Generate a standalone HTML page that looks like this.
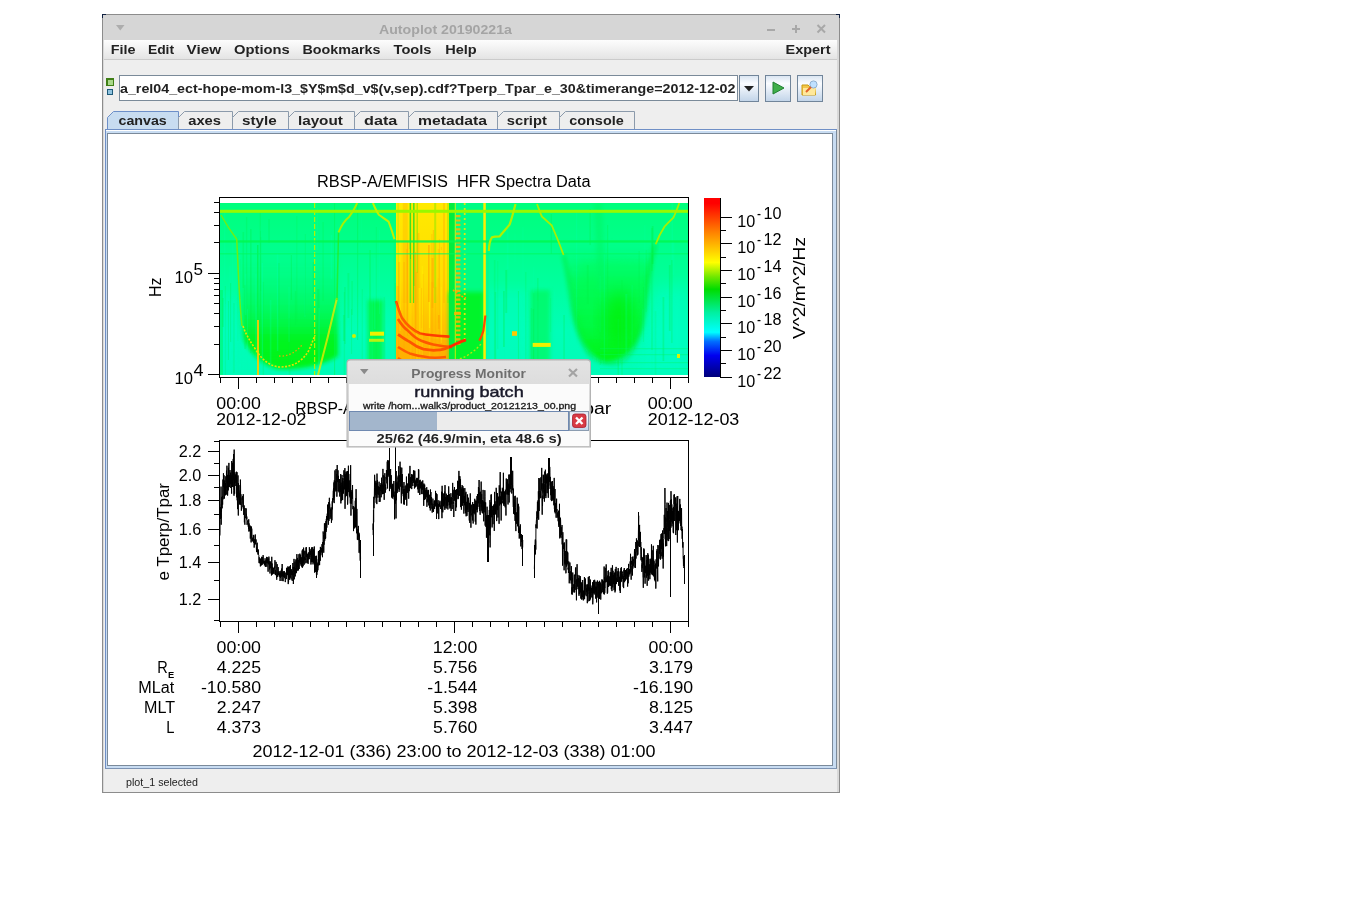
<!DOCTYPE html><html><head><meta charset="utf-8"><style>html,body{margin:0;padding:0;background:#fff;width:1345px;height:916px;overflow:hidden}svg{display:block;will-change:transform}text{font-family:"Liberation Sans",sans-serif;white-space:pre}</style></head><body>
<svg width="1345" height="916" viewBox="0 0 1345 916" shape-rendering="crispEdges">
<defs>
<linearGradient id="menuG" x1="0" y1="0" x2="0" y2="1"><stop offset="0" stop-color="#fdfdfd"/><stop offset="1" stop-color="#e4e4e4"/></linearGradient>
<linearGradient id="btnG" x1="0" y1="0" x2="0" y2="1"><stop offset="0" stop-color="#dbe6f2"/><stop offset="0.3" stop-color="#fafcff"/><stop offset="1" stop-color="#c3d5e9"/></linearGradient>
<linearGradient id="dlgT" x1="0" y1="0" x2="0" y2="1"><stop offset="0" stop-color="#e3e3e3"/><stop offset="1" stop-color="#cdcdcd"/></linearGradient>
<linearGradient id="cbar" x1="0" y1="1" x2="0" y2="0">
<stop offset="0" stop-color="#00007a"/><stop offset="0.12" stop-color="#0000f0"/><stop offset="0.2" stop-color="#0070ff"/><stop offset="0.25" stop-color="#00ffff"/><stop offset="0.36" stop-color="#00f0a0"/><stop offset="0.49" stop-color="#00dc00"/><stop offset="0.56" stop-color="#70e800"/><stop offset="0.64" stop-color="#ffff00"/><stop offset="0.80" stop-color="#ff8800"/><stop offset="0.97" stop-color="#ff0000"/><stop offset="1" stop-color="#ff0000"/></linearGradient>
</defs>
<rect x="102" y="14" width="738" height="779" fill="#8c8c8c"/>
<rect x="103" y="15" width="736" height="777" fill="#eeeeee"/>
<rect x="103" y="15" width="736" height="25" fill="#d6d6d6"/>
<path d="M102 14h4v1h-3v3h-1z" fill="#102040"/>
<path d="M836 14h4v4h-1v-3h-3z" fill="#102040"/>
<rect x="837" y="40" width="2" height="752" fill="#d9d9d9"/>
<rect x="103" y="40" width="1" height="752" fill="#d9d9d9"/>
<text x="379.0" y="33.7" font-size="13" font-weight="bold" fill="#a4a4a4" textLength="133.0" lengthAdjust="spacingAndGlyphs">Autoplot 20190221a</text>
<path d="M116 25h8.5l-4.25 5.5z" fill="#adadad" shape-rendering="geometricPrecision"/>
<rect x="767" y="29" width="8" height="2" fill="#a8a8a8"/>
<rect x="792" y="28" width="8" height="2" fill="#a8a8a8"/><rect x="795" y="25" width="2" height="8" fill="#a8a8a8"/>
<path d="M817.5 25L825 32.5M825 25L817.5 32.5" stroke="#a8a8a8" stroke-width="2" shape-rendering="geometricPrecision"/>
<rect x="104" y="40" width="733" height="19" fill="url(#menuG)"/>
<rect x="104" y="59" width="733" height="1" fill="#cbcbcb"/>
<text x="110.7" y="53.8" font-size="13" font-weight="bold" fill="#222" textLength="24.8" lengthAdjust="spacingAndGlyphs">File</text>
<text x="147.9" y="53.8" font-size="13" font-weight="bold" fill="#222" textLength="26.2" lengthAdjust="spacingAndGlyphs">Edit</text>
<text x="186.5" y="53.8" font-size="13" font-weight="bold" fill="#222" textLength="34.5" lengthAdjust="spacingAndGlyphs">View</text>
<text x="234.0" y="53.8" font-size="13" font-weight="bold" fill="#222" textLength="55.7" lengthAdjust="spacingAndGlyphs">Options</text>
<text x="302.5" y="53.8" font-size="13" font-weight="bold" fill="#222" textLength="78.0" lengthAdjust="spacingAndGlyphs">Bookmarks</text>
<text x="393.6" y="53.8" font-size="13" font-weight="bold" fill="#222" textLength="37.9" lengthAdjust="spacingAndGlyphs">Tools</text>
<text x="445.2" y="53.8" font-size="13" font-weight="bold" fill="#222" textLength="31.5" lengthAdjust="spacingAndGlyphs">Help</text>
<text x="785.5" y="53.8" font-size="13" font-weight="bold" fill="#222" textLength="45.0" lengthAdjust="spacingAndGlyphs">Expert</text>
<rect x="106" y="78" width="8" height="8" rx="1" fill="#3f7f16"/><rect x="107.5" y="79.5" width="5" height="5" fill="#a9d88a"/>
<rect x="107" y="89" width="6" height="6" fill="#1d5a7a"/><rect x="108" y="90" width="4" height="4" fill="#8fc3df"/>
<rect x="119" y="75" width="619" height="26" fill="#7a8a99"/><rect x="120" y="76" width="617" height="24" fill="#fff"/>
<text x="120.0" y="93.1" font-size="13" font-weight="bold" fill="#222" textLength="615.5" lengthAdjust="spacingAndGlyphs">a_rel04_ect-hope-mom-l3_$Y$m$d_v$(v,sep).cdf?Tperp_Tpar_e_30&amp;timerange=2012-12-02</text>
<rect x="739" y="75" width="20" height="27" fill="#71859a"/><rect x="740" y="76" width="18" height="25" fill="url(#btnG)"/>
<rect x="765" y="75" width="26" height="27" fill="#71859a"/><rect x="766" y="76" width="24" height="25" fill="url(#btnG)"/>
<rect x="797" y="75" width="26" height="27" fill="#71859a"/><rect x="798" y="76" width="24" height="25" fill="url(#btnG)"/>
<path d="M744 86h10l-5 5.5z" fill="#222" shape-rendering="geometricPrecision"/>
<path d="M773 82v12l11-6z" fill="#3fae4a" stroke="#1f8030" stroke-width="1" shape-rendering="geometricPrecision"/>
<g shape-rendering="geometricPrecision"><path d="M802 85h6l1.5 1.5h6v8.5h-13.5z" fill="#f2c64a" stroke="#c99a10" stroke-width="1"/><path d="M803 88h13l-1 7h-12z" fill="#ffe89a"/><circle cx="813.5" cy="84.5" r="3.6" fill="#bfe0ff" stroke="#8fb0d0" stroke-width="1"/><path d="M811 87l-5 5" stroke="#e0602a" stroke-width="2"/></g>
<path d="M107 129V117l6-6H178V129z" fill="#c8dcf0" stroke="#6d8fc8" stroke-width="1" shape-rendering="geometricPrecision" transform="translate(0.5,0.5)"/>
<text x="118.5" y="124.7" font-size="13" font-weight="bold" fill="#222" textLength="48.2" lengthAdjust="spacingAndGlyphs">canvas</text>
<path d="M178 129V117l6-6H232V129" fill="#eeeeee" stroke="#8b9aab" stroke-width="1" shape-rendering="geometricPrecision" transform="translate(0.5,0.5)"/>
<text x="188.2" y="124.7" font-size="13" font-weight="bold" fill="#222" textLength="32.8" lengthAdjust="spacingAndGlyphs">axes</text>
<path d="M232 129V117l6-6H288V129" fill="#eeeeee" stroke="#8b9aab" stroke-width="1" shape-rendering="geometricPrecision" transform="translate(0.5,0.5)"/>
<text x="242.1" y="124.7" font-size="13" font-weight="bold" fill="#222" textLength="34.7" lengthAdjust="spacingAndGlyphs">style</text>
<path d="M288 129V117l6-6H354V129" fill="#eeeeee" stroke="#8b9aab" stroke-width="1" shape-rendering="geometricPrecision" transform="translate(0.5,0.5)"/>
<text x="297.9" y="124.7" font-size="13" font-weight="bold" fill="#222" textLength="45.0" lengthAdjust="spacingAndGlyphs">layout</text>
<path d="M354 129V117l6-6H408V129" fill="#eeeeee" stroke="#8b9aab" stroke-width="1" shape-rendering="geometricPrecision" transform="translate(0.5,0.5)"/>
<text x="364.0" y="124.7" font-size="13" font-weight="bold" fill="#222" textLength="33.3" lengthAdjust="spacingAndGlyphs">data</text>
<path d="M408 129V117l6-6H497V129" fill="#eeeeee" stroke="#8b9aab" stroke-width="1" shape-rendering="geometricPrecision" transform="translate(0.5,0.5)"/>
<text x="418.0" y="124.7" font-size="13" font-weight="bold" fill="#222" textLength="69.0" lengthAdjust="spacingAndGlyphs">metadata</text>
<path d="M497 129V117l6-6H559V129" fill="#eeeeee" stroke="#8b9aab" stroke-width="1" shape-rendering="geometricPrecision" transform="translate(0.5,0.5)"/>
<text x="506.8" y="124.7" font-size="13" font-weight="bold" fill="#222" textLength="40.0" lengthAdjust="spacingAndGlyphs">script</text>
<path d="M559 129V117l6-6H634V129" fill="#eeeeee" stroke="#8b9aab" stroke-width="1" shape-rendering="geometricPrecision" transform="translate(0.5,0.5)"/>
<text x="569.2" y="124.7" font-size="13" font-weight="bold" fill="#222" textLength="54.6" lengthAdjust="spacingAndGlyphs">console</text>
<rect x="105" y="129" width="732" height="640" fill="#6f8fc6"/>
<rect x="106" y="130" width="730" height="638" fill="#c8dcf2"/>
<rect x="106" y="130" width="730" height="1" fill="#ffffff"/>
<rect x="836" y="130" width="1" height="639" fill="#7b8a9a"/>
<rect x="105" y="768" width="732" height="1" fill="#7d93b3"/>
<rect x="107" y="133" width="726" height="633" fill="#7b8a9a"/>
<rect x="108" y="134" width="724" height="631" fill="#ffffff"/>
<text x="126.0" y="786.0" font-size="11" font-weight="normal" fill="#222" textLength="72.0" lengthAdjust="spacingAndGlyphs">plot_1 selected</text>
<defs><clipPath id="spc"><rect x="220" y="203" width="468" height="172"/></clipPath>
<linearGradient id="bgG" x1="0" y1="0" x2="0" y2="1">
<stop offset="0" stop-color="#00ff7c"/><stop offset="0.22" stop-color="#00ff8a"/><stop offset="0.5" stop-color="#00ffa0"/><stop offset="0.75" stop-color="#00feb8"/><stop offset="1" stop-color="#00fcb8"/></linearGradient>
<linearGradient id="yelG" x1="0" y1="0" x2="0" y2="1">
<stop offset="0" stop-color="#ffea00"/><stop offset="0.45" stop-color="#ffdc00"/><stop offset="0.7" stop-color="#ffc400"/><stop offset="1" stop-color="#ffb000"/></linearGradient>
<linearGradient id="grnU" x1="0" y1="0" x2="0" y2="1">
<stop offset="0" stop-color="#00fc70" stop-opacity="0"/><stop offset="0.35" stop-color="#00f840" stop-opacity="0.7"/><stop offset="1" stop-color="#00f614" stop-opacity="1"/></linearGradient>
<filter id="bl2" x="-20%" y="-20%" width="140%" height="140%"><feGaussianBlur stdDeviation="2"/></filter>
<filter id="bl4" x="-20%" y="-20%" width="140%" height="140%"><feGaussianBlur stdDeviation="4"/></filter>
<filter id="bl8" x="-30%" y="-30%" width="160%" height="160%"><feGaussianBlur stdDeviation="8"/></filter>
</defs>
<g clip-path="url(#spc)" shape-rendering="geometricPrecision">
<rect x="220" y="203" width="468" height="172" fill="url(#bgG)"/>
<path d="M652 290 L688 285 L688 375 L640 375 Z" fill="#00fec8" opacity="0.6" filter="url(#bl8)"/>
<path d="M220 300 L238 300 L240 375 L220 375Z" fill="#00fcc0" opacity="0.5" filter="url(#bl4)"/>
<path d="M486 290 L530 290 L528 375 L486 375Z" fill="#00fec0" opacity="0.5" filter="url(#bl4)"/>
<linearGradient id="grnL" x1="0" y1="250" x2="0" y2="372" gradientUnits="userSpaceOnUse"><stop offset="0" stop-color="#00fc60" stop-opacity="0"/><stop offset="0.4" stop-color="#00f840" stop-opacity="0.55"/><stop offset="0.75" stop-color="#00f414" stop-opacity="0.95"/><stop offset="1" stop-color="#00f414" stop-opacity="1"/></linearGradient>
<path d="M240 250 C240.5 300 241 330 244 340 C252 356 264 366 278 369 C300 370 322 366 338 356 L338 250 Z" fill="url(#grnL)" filter="url(#bl2)"/>
<rect x="220" y="290" width="3" height="85" fill="#00f660" opacity="0.5"/>
<rect x="368" y="300" width="15" height="75" fill="#00f630" opacity="0.75" filter="url(#bl2)"/>
<rect x="530" y="290" width="20" height="85" fill="#00f850" opacity="0.6" filter="url(#bl2)"/>
<path d="M560 240 C566 260 571 290 574 315 C580 345 592 358 606 362 C622 362 636 350 641 326 C645 300 649 270 656 244 Z" fill="url(#grnU)" filter="url(#bl2)"/>
<path d="M578 262 C590 258 640 258 652 262 L644 330 C630 345 600 345 582 330Z" fill="#00ff50" opacity="0.35" filter="url(#bl4)"/>
<ellipse cx="619" cy="320" rx="16" ry="28" fill="#00f000" opacity="0.7" filter="url(#bl8)"/>
<path d="M594 203 L602 203 L606 290 L598 290Z" fill="#00f660" opacity="0.5" filter="url(#bl2)"/>
<rect x="396" y="203" width="53" height="172" fill="url(#yelG)"/>
<rect x="397.4" y="203" width="1.4" height="100" fill="#c8f000" opacity="0.8"/>
<rect x="402.8" y="203" width="4.9" height="100" fill="#ffc000" opacity="0.5"/>
<rect x="409.6" y="203" width="1.5" height="100" fill="#20e020" opacity="0.85"/>
<rect x="413" y="203" width="1.6" height="100" fill="#30e020" opacity="0.85"/>
<rect x="416.5" y="203" width="1.5" height="100" fill="#a0e800" opacity="0.8"/>
<rect x="434.2" y="203" width="2" height="100" fill="#a8e800" opacity="0.7"/>
<rect x="443" y="203" width="2" height="100" fill="#ffb800" opacity="0.5"/>
<rect x="447" y="203" width="2" height="100" fill="#b0e800" opacity="0.6"/>
<rect x="437.9" y="278" width="1.2" height="45" fill="#ffa800" opacity="0.43"/>
<rect x="417.2" y="233" width="2.2" height="99" fill="#ffa800" opacity="0.38"/>
<rect x="418.6" y="288" width="2.0" height="75" fill="#fff000" opacity="0.47"/>
<rect x="431.2" y="234" width="1.2" height="119" fill="#ffa800" opacity="0.32"/>
<rect x="431.3" y="282" width="2.1" height="118" fill="#ffa800" opacity="0.31"/>
<rect x="432.8" y="230" width="1.4" height="58" fill="#ffa800" opacity="0.41"/>
<rect x="437.9" y="249" width="1.8" height="80" fill="#ffa800" opacity="0.58"/>
<rect x="408.2" y="249" width="1.5" height="86" fill="#fff000" opacity="0.38"/>
<rect x="396.8" y="286" width="2.0" height="73" fill="#ffa800" opacity="0.63"/>
<rect x="416.8" y="286" width="1.1" height="107" fill="#ffa800" opacity="0.54"/>
<rect x="431.6" y="258" width="1.7" height="50" fill="#ffa800" opacity="0.54"/>
<rect x="429.0" y="253" width="1.1" height="75" fill="#fff000" opacity="0.58"/>
<rect x="415.8" y="273" width="2.1" height="129" fill="#fff000" opacity="0.55"/>
<rect x="438.1" y="239" width="2.0" height="76" fill="#fff000" opacity="0.49"/>
<rect x="420.9" y="288" width="1.4" height="40" fill="#ffa800" opacity="0.45"/>
<rect x="428.8" y="286" width="1.3" height="129" fill="#fff000" opacity="0.37"/>
<rect x="438.8" y="239" width="0.9" height="117" fill="#ffa800" opacity="0.59"/>
<rect x="403.3" y="262" width="1.5" height="90" fill="#ffa800" opacity="0.34"/>
<rect x="440.9" y="247" width="0.9" height="40" fill="#ffa800" opacity="0.37"/>
<rect x="413.8" y="286" width="1.5" height="81" fill="#fff000" opacity="0.53"/>
<rect x="440.7" y="250" width="1.4" height="93" fill="#fff000" opacity="0.56"/>
<rect x="422.1" y="271" width="0.8" height="44" fill="#fff000" opacity="0.35"/>
<rect x="407.1" y="242" width="1.1" height="94" fill="#ffa800" opacity="0.61"/>
<rect x="414.2" y="252" width="1.8" height="111" fill="#ffa800" opacity="0.63"/>
<rect x="415.5" y="272" width="2.0" height="61" fill="#ffa800" opacity="0.60"/>
<rect x="422.3" y="274" width="1.2" height="84" fill="#ffa800" opacity="0.32"/>
<rect x="398.2" y="262" width="2.0" height="42" fill="#ffa800" opacity="0.49"/>
<rect x="421.5" y="266" width="1.5" height="91" fill="#fff000" opacity="0.47"/>
<rect x="428.0" y="245" width="1.7" height="57" fill="#ffa800" opacity="0.65"/>
<rect x="434.8" y="287" width="1.4" height="64" fill="#ffa800" opacity="0.32"/>
<rect x="396.9" y="245" width="1.0" height="102" fill="#fff000" opacity="0.39"/>
<rect x="399.4" y="242" width="1.5" height="89" fill="#fff000" opacity="0.46"/>
<rect x="410.3" y="259" width="1.1" height="106" fill="#fff000" opacity="0.39"/>
<rect x="406.1" y="249" width="2.1" height="73" fill="#ffa800" opacity="0.36"/>
<rect x="449" y="203" width="35" height="172" fill="#00fc84"/>
<path d="M449 292 L484 292 L484 375 L449 375Z" fill="#00f428" opacity="0.95" filter="url(#bl2)"/>
<rect x="449" y="203" width="5.8" height="172" fill="#00ee40"/>
<rect x="454.8" y="203" width="1" height="172" fill="#f0f000" opacity="0.8"/>
<line x1="458.2" y1="215" x2="458.2" y2="345" stroke="#ffb000" stroke-width="4.5" stroke-dasharray="2.2 2.2" opacity="0.9"/>
<line x1="464.7" y1="203" x2="464.7" y2="340" stroke="#ffe000" stroke-width="1.8" stroke-dasharray="2 3" opacity="0.9"/>
<rect x="483.3" y="203" width="2.5" height="172" fill="#ffee00"/>
<path d="M396 301 C398 308 400 314 402 318 C406 324 412 330 420 333.5 C428 335 440 336 449.6 336.6" fill="none" stroke="#ff3c00" stroke-width="2.6"/>
<path d="M398 319 C401 324 404 328 407.6 330.3 C413 336 417 339 421.3 340.8 C427 343 431 344.5 436 345 C441 346 445 346.5 452 347" fill="none" stroke="#ff3000" stroke-width="2.6"/>
<path d="M398 334.5 C402 337 406 340 409.7 341.8 C414 345 418 347.5 423.4 349.2 C428 350 432 350.5 436 350.2 C442 350 448 348 453.7 345 C458 343 462 341 466 339.8" fill="none" stroke="#ff2c00" stroke-width="2.8"/>
<path d="M398 347 C402 349.5 406 352 409.7 353.4 C415 355 419 356 423.4 356.5 C430 358 438 358 446 357" fill="none" stroke="#ff3800" stroke-width="2.6"/>
<path d="M398 358 C404 362 412 366 420 368" fill="none" stroke="#ff4000" stroke-width="2.2"/>
<path d="M485.4 315.5 C485 320 484 325 483.4 330.7 C482 335 481 338 479.3 340.8" fill="none" stroke="#ff4800" stroke-width="2.2"/>
<path d="M396 300 C405 330 425 340 449 340 L449 375 L396 375Z" fill="#ffa000" opacity="0.35"/>
<path d="M453 290 C456 292 460 296 466 298" fill="none" stroke="#ffa000" stroke-width="1.6" stroke-dasharray="2 1.5"/>
<rect x="454" y="312" width="7" height="3" fill="#ffb000" opacity="0.8"/>
<path d="M456 360 C465 358 474 352 481 344" fill="none" stroke="#e8e000" stroke-width="1.4" stroke-dasharray="2 2" opacity="0.8"/>
<rect x="260.1" y="231" width="0.9" height="116" fill="#00ee40" opacity="0.21"/>
<rect x="294.8" y="291" width="1.4" height="34" fill="#00ee40" opacity="0.21"/>
<rect x="494.6" y="292" width="1.6" height="135" fill="#00ee40" opacity="0.26"/>
<rect x="357.0" y="203" width="1.2" height="137" fill="#00ee40" opacity="0.30"/>
<rect x="493.9" y="260" width="1.6" height="113" fill="#00ee40" opacity="0.19"/>
<rect x="262.5" y="282" width="1.6" height="132" fill="#00ee40" opacity="0.18"/>
<rect x="567.1" y="290" width="1.6" height="46" fill="#00ffb0" opacity="0.26"/>
<rect x="603.8" y="254" width="0.9" height="111" fill="#00ffb0" opacity="0.29"/>
<rect x="288.5" y="287" width="1.1" height="55" fill="#00ffb0" opacity="0.23"/>
<rect x="506.8" y="227" width="1.7" height="42" fill="#00ffb0" opacity="0.23"/>
<rect x="651.1" y="228" width="2.0" height="122" fill="#00ee40" opacity="0.24"/>
<rect x="504.0" y="319" width="0.9" height="114" fill="#00ffb0" opacity="0.19"/>
<rect x="259.7" y="226" width="1.0" height="46" fill="#00ffb0" opacity="0.18"/>
<rect x="617.5" y="319" width="1.5" height="105" fill="#00ee40" opacity="0.26"/>
<rect x="244.3" y="285" width="1.6" height="64" fill="#00ee40" opacity="0.25"/>
<rect x="312.7" y="262" width="1.4" height="35" fill="#00ee40" opacity="0.27"/>
<rect x="229.2" y="266" width="1.3" height="45" fill="#00ffb0" opacity="0.20"/>
<rect x="645.6" y="250" width="1.4" height="62" fill="#00ee40" opacity="0.14"/>
<rect x="651.2" y="271" width="1.8" height="109" fill="#00ffb0" opacity="0.27"/>
<rect x="600.6" y="301" width="1.2" height="50" fill="#00ee40" opacity="0.17"/>
<rect x="487.5" y="241" width="0.9" height="94" fill="#00ee40" opacity="0.21"/>
<rect x="550.7" y="214" width="1.3" height="40" fill="#00ee40" opacity="0.25"/>
<rect x="375.8" y="227" width="1.0" height="132" fill="#00ee40" opacity="0.18"/>
<rect x="379.0" y="230" width="1.0" height="84" fill="#00ffb0" opacity="0.20"/>
<rect x="532.7" y="309" width="1.4" height="140" fill="#00ee40" opacity="0.30"/>
<rect x="244.8" y="274" width="1.9" height="41" fill="#00ffb0" opacity="0.23"/>
<rect x="224.2" y="211" width="1.1" height="70" fill="#00ffb0" opacity="0.25"/>
<rect x="344.1" y="287" width="1.7" height="57" fill="#00ee40" opacity="0.22"/>
<rect x="586.9" y="265" width="1.8" height="39" fill="#00ee40" opacity="0.23"/>
<rect x="671.5" y="203" width="1.6" height="61" fill="#00ffb0" opacity="0.23"/>
<rect x="530.6" y="308" width="1.5" height="102" fill="#00ee40" opacity="0.25"/>
<rect x="371.6" y="283" width="1.4" height="94" fill="#00ffb0" opacity="0.13"/>
<rect x="621.4" y="280" width="1.2" height="97" fill="#00ee40" opacity="0.26"/>
<rect x="256.4" y="307" width="1.0" height="125" fill="#00ffb0" opacity="0.14"/>
<rect x="638.4" y="251" width="1.6" height="52" fill="#00ee40" opacity="0.15"/>
<rect x="528.9" y="289" width="1.3" height="21" fill="#00ffb0" opacity="0.21"/>
<rect x="351.1" y="309" width="1.0" height="45" fill="#00ee40" opacity="0.24"/>
<rect x="642.1" y="309" width="1.9" height="36" fill="#00ffb0" opacity="0.16"/>
<rect x="553.8" y="292" width="1.6" height="74" fill="#00ffb0" opacity="0.19"/>
<rect x="525.2" y="272" width="1.2" height="104" fill="#00ee40" opacity="0.21"/>
<rect x="651.7" y="226" width="1.8" height="38" fill="#00ee40" opacity="0.32"/>
<rect x="330.7" y="235" width="1.4" height="44" fill="#00ffb0" opacity="0.28"/>
<rect x="318.1" y="308" width="1.8" height="76" fill="#00ffb0" opacity="0.30"/>
<rect x="505.3" y="270" width="1.9" height="43" fill="#00ee40" opacity="0.30"/>
<rect x="230.1" y="283" width="1.0" height="59" fill="#00ee40" opacity="0.28"/>
<rect x="668.9" y="265" width="1.8" height="66" fill="#00ee40" opacity="0.27"/>
<rect x="250.0" y="229" width="1.6" height="124" fill="#00ee40" opacity="0.28"/>
<rect x="517.9" y="291" width="1.0" height="85" fill="#00ee40" opacity="0.32"/>
<rect x="224.9" y="286" width="0.9" height="126" fill="#00ee40" opacity="0.20"/>
<rect x="374.4" y="258" width="0.9" height="71" fill="#00ffb0" opacity="0.31"/>
<rect x="241.4" y="316" width="0.8" height="60" fill="#00ffb0" opacity="0.21"/>
<rect x="537.2" y="278" width="1.3" height="117" fill="#00ee40" opacity="0.24"/>
<rect x="233.4" y="303" width="1.1" height="70" fill="#00ee40" opacity="0.25"/>
<rect x="242.4" y="232" width="1.7" height="56" fill="#00ee40" opacity="0.24"/>
<rect x="643.1" y="287" width="0.9" height="55" fill="#00ee40" opacity="0.17"/>
<rect x="503.0" y="291" width="1.8" height="56" fill="#00ee40" opacity="0.31"/>
<rect x="259.6" y="212" width="1.3" height="111" fill="#00ee40" opacity="0.25"/>
<rect x="575.9" y="211" width="1.3" height="135" fill="#00ffb0" opacity="0.21"/>
<rect x="347.4" y="273" width="1.9" height="45" fill="#00ee40" opacity="0.22"/>
<rect x="607.1" y="225" width="1.1" height="126" fill="#00ee40" opacity="0.26"/>
<rect x="361.3" y="217" width="0.8" height="30" fill="#00ffb0" opacity="0.13"/>
<rect x="662.5" y="297" width="1.8" height="64" fill="#00ee40" opacity="0.28"/>
<rect x="532.9" y="267" width="1.4" height="83" fill="#00ffb0" opacity="0.14"/>
<rect x="255.0" y="274" width="1.7" height="108" fill="#00ffb0" opacity="0.18"/>
<rect x="393.7" y="235" width="1.8" height="65" fill="#00ee40" opacity="0.15"/>
<rect x="317.3" y="289" width="2.0" height="68" fill="#00ee40" opacity="0.30"/>
<rect x="322.5" y="222" width="1.2" height="79" fill="#00ee40" opacity="0.24"/>
<rect x="537.4" y="301" width="0.9" height="49" fill="#00ffb0" opacity="0.13"/>
<rect x="245.9" y="217" width="1.4" height="114" fill="#00ee40" opacity="0.21"/>
<rect x="316.9" y="208" width="1.2" height="42" fill="#00ffb0" opacity="0.20"/>
<rect x="343.7" y="292" width="1.4" height="104" fill="#00ee40" opacity="0.20"/>
<rect x="488.3" y="274" width="1.9" height="89" fill="#00ffb0" opacity="0.13"/>
<rect x="238.9" y="248" width="1.5" height="116" fill="#00ffb0" opacity="0.14"/>
<rect x="599.7" y="276" width="0.8" height="56" fill="#00ffb0" opacity="0.16"/>
<rect x="589.3" y="209" width="1.7" height="36" fill="#00ee40" opacity="0.24"/>
<rect x="237.3" y="236" width="1.0" height="105" fill="#00ee40" opacity="0.12"/>
<rect x="342.9" y="315" width="1.9" height="26" fill="#00ee40" opacity="0.26"/>
<rect x="351.5" y="281" width="1.1" height="34" fill="#00ee40" opacity="0.30"/>
<rect x="625.3" y="294" width="2.0" height="65" fill="#00ffb0" opacity="0.19"/>
<rect x="296.0" y="216" width="1.5" height="106" fill="#00ee40" opacity="0.14"/>
<rect x="533.1" y="293" width="1.3" height="133" fill="#00ee40" opacity="0.20"/>
<rect x="550.3" y="298" width="0.9" height="34" fill="#00ee40" opacity="0.17"/>
<rect x="563.4" y="315" width="1.3" height="138" fill="#00ee40" opacity="0.29"/>
<rect x="383.6" y="297" width="1.4" height="124" fill="#00ee40" opacity="0.15"/>
<rect x="304.3" y="267" width="1.2" height="50" fill="#00ffb0" opacity="0.16"/>
<rect x="514.5" y="234" width="1.0" height="28" fill="#00ffb0" opacity="0.15"/>
<rect x="221.9" y="298" width="2.0" height="29" fill="#00ee40" opacity="0.22"/>
<rect x="654.7" y="311" width="1.6" height="108" fill="#00ee40" opacity="0.13"/>
<rect x="225.0" y="304" width="1.4" height="57" fill="#00ffb0" opacity="0.28"/>
<rect x="519.4" y="320" width="1.8" height="77" fill="#00ffb0" opacity="0.24"/>
<rect x="522.3" y="227" width="1.2" height="73" fill="#00ffb0" opacity="0.16"/>
<rect x="269.8" y="300" width="1.6" height="125" fill="#00ffb0" opacity="0.24"/>
<rect x="247.1" y="309" width="0.9" height="77" fill="#00ffb0" opacity="0.27"/>
<rect x="288.7" y="318" width="1.6" height="105" fill="#00ee40" opacity="0.17"/>
<rect x="260.3" y="237" width="1.3" height="54" fill="#00ee40" opacity="0.13"/>
<rect x="232.1" y="243" width="1.3" height="139" fill="#00ffb0" opacity="0.16"/>
<rect x="276.9" y="253" width="1.4" height="98" fill="#00ffb0" opacity="0.29"/>
<rect x="599.7" y="305" width="1.0" height="60" fill="#00ee40" opacity="0.24"/>
<rect x="239.8" y="259" width="1.0" height="40" fill="#00ee40" opacity="0.12"/>
<rect x="278.3" y="263" width="1.3" height="56" fill="#00ee40" opacity="0.25"/>
<rect x="361.7" y="289" width="1.1" height="115" fill="#00ee40" opacity="0.18"/>
<rect x="497.2" y="261" width="1.1" height="88" fill="#00ee40" opacity="0.15"/>
<rect x="569.1" y="285" width="1.0" height="57" fill="#00ffb0" opacity="0.12"/>
<rect x="394.7" y="283" width="1.0" height="134" fill="#00ee40" opacity="0.24"/>
<rect x="227.9" y="301" width="1.0" height="59" fill="#00ee40" opacity="0.29"/>
<rect x="644.2" y="225" width="1.2" height="140" fill="#00ffb0" opacity="0.13"/>
<rect x="290.8" y="255" width="1.1" height="45" fill="#00ee40" opacity="0.30"/>
<rect x="237.1" y="314" width="1.4" height="74" fill="#00ffb0" opacity="0.31"/>
<rect x="304.8" y="234" width="1.2" height="81" fill="#00ee40" opacity="0.18"/>
<rect x="261.7" y="263" width="1.3" height="120" fill="#00ffb0" opacity="0.32"/>
<rect x="672.5" y="241" width="1.9" height="34" fill="#00ffb0" opacity="0.25"/>
<rect x="671.3" y="260" width="1.2" height="83" fill="#00ee40" opacity="0.30"/>
<rect x="268.3" y="219" width="1.5" height="24" fill="#00ee40" opacity="0.23"/>
<rect x="631.4" y="285" width="1.4" height="96" fill="#00ffb0" opacity="0.13"/>
<line x1="314.6" y1="203" x2="314.6" y2="375" stroke="#b8f000" stroke-width="1.2" stroke-dasharray="5 2"/>
<line x1="258" y1="320" x2="258" y2="375" stroke="#ffc800" stroke-width="2" opacity="0.9"/>
<line x1="257.8" y1="245" x2="257.8" y2="320" stroke="#00f440" stroke-width="1.2" opacity="0.7"/>
<line x1="334.6" y1="203" x2="334.6" y2="375" stroke="#00f650" stroke-width="1" opacity="0.5"/>
<line x1="370" y1="250" x2="370" y2="375" stroke="#00f650" stroke-width="1" opacity="0.6"/>
<rect x="220" y="209.8" width="468" height="3" fill="#98f800"/>
<rect x="220" y="240.3" width="468" height="2.3" fill="#00f850" opacity="0.85"/>
<rect x="220" y="253" width="468" height="1.5" fill="#00fa60" opacity="0.6"/>
<rect x="600" y="348" width="88" height="1.2" fill="#00f660" opacity="0.35"/>
<rect x="600" y="354" width="88" height="1.2" fill="#00f660" opacity="0.35"/>
<rect x="600" y="362" width="88" height="1.2" fill="#00f660" opacity="0.35"/>
<rect x="600" y="368" width="88" height="1.2" fill="#00f660" opacity="0.35"/>
<path d="M221 215 C226 224 232 233 236.7 239.3 C238 260 239 300 242 326" fill="none" stroke="#80ec00" stroke-width="1.5" opacity="0.85"/>
<path d="M243 326 C246 335 250 341 256 350 C262 360 270 366 279 367 C290 367 300 364 308 352 C311 346 313 340 315 335" fill="none" stroke="#e8e000" stroke-width="1.6" stroke-dasharray="2 1.5"/>
<path d="M279 356 C288 357 296 352 302 345" fill="none" stroke="#ffa000" stroke-width="1.3" stroke-dasharray="1.5 2" opacity="0.9"/>
<path d="M337 298 C332 320 326 345 318 375" fill="none" stroke="#e8e800" stroke-width="2" opacity="0.8"/>
<path d="M337 300 C337.5 280 338 255 338.5 232.4" fill="none" stroke="#30e800" stroke-width="1.5" opacity="0.6"/>
<path d="M338.5 232.4 C342 224 345 220 349.3 216.7 C353 212 355 208 357.2 203" fill="none" stroke="#a8f000" stroke-width="2"/>
<path d="M372.9 203 C375 208 377 212 378.8 214.7 C382 217 385 219 388.6 221.6 C391 228 393 234 394.5 239.3" fill="none" stroke="#c0f000" stroke-width="2"/>
<path d="M488.9 251 C489 245 490 240 491.9 237.3 C494 236.5 497 236.3 499.7 236.3 C503 232 506 229 509.6 224.6 C512 218 514 210 515.5 204" fill="none" stroke="#b0f000" stroke-width="2.2"/>
<path d="M537 204 C539 209 540 213 542 216.7 C546 220 549 223 551.8 225.5 C556 235 560 245 563.6 255" fill="none" stroke="#a8f000" stroke-width="1.8"/>
<path d="M563.6 255 C566 266 568 277 569.5 288.4 C572 310 578 340 590 355" fill="none" stroke="#10e010" stroke-width="3" opacity="0.45" filter="url(#bl2)"/>
<path d="M679.3 203 C677 210 675 214 673.4 217.7 C670 221 667 224 664.6 226.5 C661 232 658 238 655.7 244.2" fill="none" stroke="#a8f000" stroke-width="1.8"/>
<path d="M655.7 244.2 C652 255 650 266 647.9 278.6 C646 300 643 320 640 330" fill="none" stroke="#10e010" stroke-width="3" opacity="0.45" filter="url(#bl2)"/>
<path d="M590 355 C598 362 610 366 620 362 C630 357 636 345 640 330" fill="none" stroke="#10e010" stroke-width="3" opacity="0.4" filter="url(#bl2)"/>
<rect x="512" y="331.2" width="5" height="4.6" fill="#ffc800"/>
<rect x="532.7" y="342.9" width="18" height="4" fill="#f0f000"/>
<rect x="370" y="331.7" width="14" height="4" fill="#f0f000"/><rect x="369" y="338.8" width="15" height="3" fill="#e8f000" opacity="0.8"/>
<circle cx="354" cy="336" r="2" fill="#d0f000"/>
<rect x="677" y="354" width="3" height="4" fill="#e0f000"/>
</g>
<g shape-rendering="crispEdges">
<path d="M219.5 197.5H688.5V377.5H219.5Z" fill="none" stroke="#000" stroke-width="1"/>
<path d="M220.5 378v5 M238.5 378v11 M256.5 378v5 M274.5 378v5 M292.5 378v5 M310.5 378v5 M328.5 378v5 M346.5 378v5 M364.5 378v5 M382.5 378v5 M400.5 378v5 M418.5 378v5 M436.5 378v5 M454.5 378v11 M472.5 378v5 M490.5 378v5 M508.5 378v5 M526.5 378v5 M544.5 378v5 M562.5 378v5 M580.5 378v5 M598.5 378v5 M616.5 378v5 M634.5 378v5 M652.5 378v5 M670.5 378v11 M688.5 378v5" stroke="#000" stroke-width="1" fill="none"/>
<path d="M208 374.5h11 M214 344.5h5 M214 326.5h5 M214 313.5h5 M214 303.5h5 M214 295.5h5 M214 289.5h5 M214 283.5h5 M214 278.5h5 M208 273.5h11 M214 242.5h5 M214 225.5h5 M214 212.5h5 M214 202.5h5" stroke="#000" stroke-width="1" fill="none"/>
</g>
<text x="317.0" y="186.6" font-size="16" font-weight="normal" fill="#000" textLength="273.5" lengthAdjust="spacingAndGlyphs">RBSP-A/EMFISIS  HFR Spectra Data</text>
<text x="174.5" y="283.1" font-size="16" font-weight="normal" fill="#000" textLength="18.5" lengthAdjust="spacingAndGlyphs">10</text>
<text x="193.5" y="275.1" font-size="16" font-weight="normal" fill="#000" textLength="9.5" lengthAdjust="spacingAndGlyphs">5</text>
<text x="174.5" y="383.9" font-size="16" font-weight="normal" fill="#000" textLength="18.5" lengthAdjust="spacingAndGlyphs">10</text>
<text x="193.5" y="376.0" font-size="16" font-weight="normal" fill="#000" textLength="10.0" lengthAdjust="spacingAndGlyphs">4</text>
<text transform="translate(161.1,297) rotate(-90)" font-size="16" textLength="19.5" lengthAdjust="spacingAndGlyphs">Hz</text>
<text x="216.3" y="409.0" font-size="16" font-weight="normal" fill="#000" textLength="44.5" lengthAdjust="spacingAndGlyphs">00:00</text>
<text x="216.3" y="424.8" font-size="16" font-weight="normal" fill="#000" textLength="90.0" lengthAdjust="spacingAndGlyphs">2012-12-02</text>
<text x="647.8" y="409.0" font-size="16" font-weight="normal" fill="#000" textLength="45.0" lengthAdjust="spacingAndGlyphs">00:00</text>
<text x="647.8" y="425.2" font-size="16" font-weight="normal" fill="#000" textLength="91.5" lengthAdjust="spacingAndGlyphs">2012-12-03</text>
<text x="295.2" y="413.8" font-size="16" font-weight="normal" fill="#000" textLength="94.0" lengthAdjust="spacingAndGlyphs">RBSP-A/ECT</text>
<text x="571.3" y="413.8" font-size="16" font-weight="normal" fill="#000" textLength="40.0" lengthAdjust="spacingAndGlyphs">Tpar</text>
<rect x="704" y="198" width="16" height="179" fill="url(#cbar)"/>
<g shape-rendering="crispEdges">
<rect x="720" y="198" width="1" height="180" fill="#000"/>
<path d="M721 377.5h11 M721 363.5h5 M721 350.5h11 M721 337.5h5 M721 323.5h11 M721 310.5h5 M721 297.5h11 M721 283.5h5 M721 270.5h11 M721 257.5h5 M721 243.5h11 M721 230.5h5 M721 217.5h11" stroke="#000" stroke-width="1"/>
</g>
<text x="737.3" y="226.6" font-size="16" font-weight="normal" fill="#000" textLength="18.0" lengthAdjust="spacingAndGlyphs">10</text>
<text x="757.0" y="218.6" font-size="16" font-weight="normal" fill="#000" textLength="4.0" lengthAdjust="spacingAndGlyphs">-</text>
<text x="763.5" y="218.6" font-size="16" font-weight="normal" fill="#000" textLength="18.0" lengthAdjust="spacingAndGlyphs">10</text>
<text x="737.3" y="253.2" font-size="16" font-weight="normal" fill="#000" textLength="18.0" lengthAdjust="spacingAndGlyphs">10</text>
<text x="757.0" y="245.2" font-size="16" font-weight="normal" fill="#000" textLength="4.0" lengthAdjust="spacingAndGlyphs">-</text>
<text x="763.5" y="245.2" font-size="16" font-weight="normal" fill="#000" textLength="18.0" lengthAdjust="spacingAndGlyphs">12</text>
<text x="737.3" y="279.9" font-size="16" font-weight="normal" fill="#000" textLength="18.0" lengthAdjust="spacingAndGlyphs">10</text>
<text x="757.0" y="271.9" font-size="16" font-weight="normal" fill="#000" textLength="4.0" lengthAdjust="spacingAndGlyphs">-</text>
<text x="763.5" y="271.9" font-size="16" font-weight="normal" fill="#000" textLength="18.0" lengthAdjust="spacingAndGlyphs">14</text>
<text x="737.3" y="306.5" font-size="16" font-weight="normal" fill="#000" textLength="18.0" lengthAdjust="spacingAndGlyphs">10</text>
<text x="757.0" y="298.5" font-size="16" font-weight="normal" fill="#000" textLength="4.0" lengthAdjust="spacingAndGlyphs">-</text>
<text x="763.5" y="298.5" font-size="16" font-weight="normal" fill="#000" textLength="18.0" lengthAdjust="spacingAndGlyphs">16</text>
<text x="737.3" y="333.2" font-size="16" font-weight="normal" fill="#000" textLength="18.0" lengthAdjust="spacingAndGlyphs">10</text>
<text x="757.0" y="325.2" font-size="16" font-weight="normal" fill="#000" textLength="4.0" lengthAdjust="spacingAndGlyphs">-</text>
<text x="763.5" y="325.2" font-size="16" font-weight="normal" fill="#000" textLength="18.0" lengthAdjust="spacingAndGlyphs">18</text>
<text x="737.3" y="359.9" font-size="16" font-weight="normal" fill="#000" textLength="18.0" lengthAdjust="spacingAndGlyphs">10</text>
<text x="757.0" y="351.9" font-size="16" font-weight="normal" fill="#000" textLength="4.0" lengthAdjust="spacingAndGlyphs">-</text>
<text x="763.5" y="351.9" font-size="16" font-weight="normal" fill="#000" textLength="18.0" lengthAdjust="spacingAndGlyphs">20</text>
<text x="737.3" y="386.5" font-size="16" font-weight="normal" fill="#000" textLength="18.0" lengthAdjust="spacingAndGlyphs">10</text>
<text x="757.0" y="378.5" font-size="16" font-weight="normal" fill="#000" textLength="4.0" lengthAdjust="spacingAndGlyphs">-</text>
<text x="763.5" y="378.5" font-size="16" font-weight="normal" fill="#000" textLength="18.0" lengthAdjust="spacingAndGlyphs">22</text>
<text transform="translate(805.2,339) rotate(-90)" font-size="16" textLength="102" lengthAdjust="spacingAndGlyphs">V^2/m^2/Hz</text>
<g shape-rendering="crispEdges">
<path d="M219.5 440.5H688.5V621.5H219.5Z" fill="none" stroke="#000" stroke-width="1"/>
<path d="M214 441.5h5 M208 451.5h11 M214 463.5h5 M208 475.5h11 M214 487.5h5 M208 500.5h11 M214 514.5h5 M208 529.5h11 M214 545.5h5 M208 562.5h11 M214 580.5h5 M208 599.5h11 M214 620.5h5" stroke="#000" stroke-width="1"/>
<path d="M220.5 622v5 M238.5 622v11 M256.5 622v5 M274.5 622v5 M292.5 622v5 M310.5 622v5 M328.5 622v5 M346.5 622v5 M364.5 622v5 M382.5 622v5 M400.5 622v5 M418.5 622v5 M436.5 622v5 M454.5 622v11 M472.5 622v5 M490.5 622v5 M508.5 622v5 M526.5 622v5 M544.5 622v5 M562.5 622v5 M580.5 622v5 M598.5 622v5 M616.5 622v5 M634.5 622v5 M652.5 622v5 M670.5 622v11 M688.5 622v5" stroke="#000" stroke-width="1" fill="none"/>
</g>
<text x="178.8" y="457.3" font-size="16" font-weight="normal" fill="#000" textLength="22.5" lengthAdjust="spacingAndGlyphs">2.2</text>
<text x="178.8" y="481.3" font-size="16" font-weight="normal" fill="#000" textLength="22.5" lengthAdjust="spacingAndGlyphs">2.0</text>
<text x="178.8" y="506.3" font-size="16" font-weight="normal" fill="#000" textLength="22.5" lengthAdjust="spacingAndGlyphs">1.8</text>
<text x="178.8" y="535.3" font-size="16" font-weight="normal" fill="#000" textLength="22.5" lengthAdjust="spacingAndGlyphs">1.6</text>
<text x="178.8" y="568.3" font-size="16" font-weight="normal" fill="#000" textLength="22.5" lengthAdjust="spacingAndGlyphs">1.4</text>
<text x="178.8" y="605.3" font-size="16" font-weight="normal" fill="#000" textLength="22.5" lengthAdjust="spacingAndGlyphs">1.2</text>
<text transform="translate(168.7,580.5) rotate(-90)" font-size="16" textLength="97.5" lengthAdjust="spacingAndGlyphs">e Tperp/Tpar</text>
<polyline points="219.60,520.4 219.76,535.5 219.92,532.4 220.08,509.8 220.24,511.1 220.40,507.0 220.56,518.8 220.72,510.0 220.88,518.1 221.04,486.6 221.20,524.7 221.36,504.2 221.52,511.7 221.68,501.1 221.84,497.1 222.00,505.1 222.16,508.3 222.32,496.4 222.48,496.2 222.64,504.6 222.80,487.1 222.96,479.5 223.12,499.3 223.28,487.2 223.44,473.3 223.60,484.4 223.76,487.3 223.92,479.1 224.08,475.3 224.24,490.5 224.40,498.6 224.56,486.3 224.72,480.4 224.88,491.2 225.04,493.8 225.20,482.9 225.36,493.9 225.52,495.3 225.68,482.5 225.84,476.3 226.00,487.6 226.16,486.4 226.32,494.6 226.48,470.7 226.64,476.7 226.80,474.7 226.96,465.7 227.12,483.9 227.28,487.6 227.44,474.9 227.60,495.6 227.76,489.8 227.92,487.7 228.08,485.2 228.24,490.4 228.40,467.8 228.56,486.6 228.72,486.3 228.88,462.9 229.04,483.3 229.20,477.3 229.36,487.1 229.52,475.0 229.68,478.9 229.84,482.1 230.00,470.1 230.16,484.2 230.32,477.1 230.48,482.7 230.64,472.7 230.80,488.0 230.96,483.1 231.12,475.3 231.28,482.9 231.44,488.7 231.60,493.6 231.76,461.0 231.92,484.4 232.08,480.2 232.24,474.6 232.40,465.6 232.56,487.0 232.72,462.8 232.88,480.0 233.04,486.8 233.20,458.9 233.36,471.3 233.52,462.3 233.68,477.6 233.84,490.3 234.00,495.7 234.16,449.6 234.32,471.9 234.48,484.7 234.64,493.7 234.80,483.1 234.96,472.3 235.12,482.9 235.28,480.4 235.44,479.1 235.60,474.5 235.76,486.0 235.92,485.7 236.08,482.4 236.24,481.6 236.40,471.7 236.56,480.1 236.72,497.3 236.88,484.0 237.04,472.2 237.20,500.3 237.36,492.8 237.52,509.1 237.68,489.2 237.84,484.5 238.00,475.4 238.16,503.1 238.32,515.5 238.48,483.3 238.64,485.6 238.80,497.8 238.96,485.1 239.12,490.8 239.28,490.6 239.44,496.0 239.60,504.5 239.76,495.5 239.92,503.8 240.08,492.8 240.24,499.6 240.40,479.6 240.56,486.0 240.72,504.9 240.88,494.2 241.04,504.0 241.20,504.2 241.36,510.7 241.52,507.2 241.68,509.1 241.84,501.2 242.00,497.5 242.16,497.8 242.32,500.1 242.48,496.2 242.64,500.8 242.80,504.5 242.96,507.3 243.12,503.9 243.28,494.2 243.44,506.7 243.60,509.1 243.76,514.9 243.92,512.2 244.08,505.4 244.24,505.6 244.40,522.4 244.56,515.5 244.72,522.4 244.88,524.7 245.04,508.0 245.20,515.6 245.36,516.6 245.52,517.8 245.68,518.2 245.84,516.9 246.00,517.9 246.16,508.4 246.32,516.5 246.48,513.9 246.64,519.3 246.80,516.6 246.96,523.2 247.12,524.9 247.28,522.7 247.44,523.3 247.60,522.6 247.76,520.3 247.92,521.9 248.08,521.2 248.24,526.5 248.40,525.2 248.56,528.7 248.72,519.3 248.88,531.5 249.04,523.4 249.20,524.2 249.36,527.6 249.52,526.3 249.68,531.2 249.84,527.4 250.00,525.5 250.16,527.2 250.32,538.6 250.48,532.6 250.64,527.0 250.80,533.2 250.96,526.0 251.12,542.4 251.28,527.0 251.44,536.8 251.60,537.5 251.76,528.6 251.92,537.0 252.08,540.6 252.24,538.5 252.40,537.9 252.56,541.3 252.72,538.6 252.88,539.3 253.04,537.6 253.20,541.3 253.36,534.9 253.52,542.6 253.68,537.5 253.84,535.5 254.00,541.9 254.16,547.6 254.32,545.0 254.48,539.4 254.64,544.6 254.80,540.4 254.96,542.0 255.12,543.2 255.28,534.5 255.44,544.3 255.60,540.1 255.76,541.8 255.92,539.3 256.08,539.6 256.24,542.1 256.40,548.7 256.56,552.1 256.72,546.9 256.88,551.5 257.04,547.5 257.20,542.7 257.36,550.4 257.52,552.1 257.68,549.9 257.84,553.0 258.00,554.6 258.16,550.7 258.32,549.5 258.48,554.2 258.64,555.0 258.80,555.3 258.96,560.2 259.12,563.1 259.28,557.3 259.44,561.4 259.60,562.8 259.76,562.2 259.92,563.3 260.08,559.0 260.24,562.4 260.40,566.4 260.56,562.8 260.72,558.5 260.88,562.3 261.04,564.3 261.20,561.6 261.36,558.8 261.52,565.4 261.68,556.8 261.84,562.3 262.00,560.7 262.16,557.1 262.32,564.7 262.48,562.0 262.64,557.3 262.80,562.9 262.96,559.7 263.12,555.1 263.28,559.0 263.44,562.1 263.60,563.3 263.76,561.9 263.92,561.5 264.08,563.9 264.24,560.8 264.40,565.4 264.56,562.1 264.72,562.6 264.88,563.5 265.04,558.3 265.20,559.4 265.36,566.9 265.52,563.0 265.68,561.0 265.84,563.1 266.00,560.4 266.16,563.0 266.32,559.9 266.48,563.1 266.64,556.9 266.80,566.8 266.96,560.6 267.12,557.0 267.28,561.7 267.44,561.2 267.60,563.1 267.76,558.7 267.92,564.0 268.08,571.7 268.24,558.3 268.40,564.0 268.56,561.8 268.72,563.6 268.88,556.6 269.04,559.0 269.20,564.9 269.36,563.3 269.52,569.4 269.68,561.3 269.84,564.6 270.00,573.5 270.16,561.7 270.32,561.4 270.48,564.7 270.64,564.8 270.80,568.2 270.96,565.9 271.12,562.8 271.28,566.5 271.44,575.5 271.60,570.8 271.76,556.8 271.92,566.0 272.08,563.5 272.24,569.3 272.40,566.5 272.56,574.5 272.72,571.0 272.88,571.1 273.04,568.6 273.20,568.0 273.36,569.6 273.52,573.4 273.68,570.7 273.84,567.6 274.00,573.9 274.16,570.0 274.32,569.2 274.48,566.6 274.64,567.7 274.80,567.6 274.96,560.2 275.12,574.4 275.28,572.9 275.44,570.0 275.60,575.1 275.76,573.0 275.92,572.9 276.08,561.9 276.24,570.9 276.40,574.1 276.56,578.6 276.72,579.7 276.88,578.3 277.04,568.2 277.20,564.2 277.36,575.3 277.52,573.2 277.68,577.0 277.84,572.6 278.00,574.1 278.16,567.1 278.32,575.1 278.48,571.5 278.64,574.8 278.80,575.3 278.96,572.9 279.12,574.8 279.28,573.4 279.44,576.7 279.60,575.7 279.76,571.3 279.92,571.2 280.08,581.0 280.24,573.3 280.40,577.9 280.56,575.5 280.72,571.5 280.88,570.7 281.04,574.4 281.20,575.1 281.36,576.6 281.52,568.6 281.68,571.5 281.84,573.7 282.00,581.0 282.16,564.0 282.32,576.1 282.48,571.9 282.64,576.2 282.80,572.2 282.96,576.0 283.12,581.2 283.28,576.0 283.44,576.4 283.60,576.2 283.76,571.3 283.92,577.0 284.08,573.7 284.24,571.1 284.40,574.6 284.56,573.8 284.72,578.2 284.88,574.7 285.04,572.5 285.20,581.5 285.36,582.1 285.52,580.7 285.68,577.7 285.84,574.4 286.00,572.9 286.16,573.5 286.32,579.0 286.48,575.2 286.64,567.8 286.80,574.4 286.96,568.0 287.12,575.2 287.28,568.8 287.44,568.5 287.60,574.8 287.76,573.8 287.92,566.4 288.08,577.6 288.24,584.1 288.40,567.0 288.56,582.4 288.72,570.6 288.88,571.5 289.04,572.9 289.20,566.8 289.36,579.8 289.52,575.9 289.68,569.9 289.84,572.1 290.00,566.1 290.16,571.7 290.32,577.7 290.48,565.0 290.64,571.0 290.80,573.8 290.96,578.1 291.12,579.5 291.28,570.7 291.44,569.3 291.60,575.0 291.76,571.0 291.92,571.2 292.08,577.9 292.24,580.9 292.40,573.8 292.56,571.5 292.72,575.2 292.88,563.0 293.04,572.2 293.20,567.0 293.36,584.0 293.52,575.7 293.68,572.7 293.84,570.9 294.00,558.9 294.16,574.9 294.32,579.3 294.48,566.9 294.64,573.9 294.80,573.9 294.96,561.6 295.12,574.4 295.28,576.4 295.44,570.1 295.60,568.2 295.76,572.5 295.92,559.4 296.08,568.1 296.24,573.2 296.40,560.0 296.56,572.3 296.72,564.0 296.88,554.1 297.04,565.1 297.20,559.8 297.36,567.0 297.52,557.9 297.68,570.7 297.84,559.8 298.00,566.0 298.16,560.0 298.32,561.3 298.48,570.3 298.64,564.0 298.80,559.9 298.96,554.2 299.12,569.0 299.28,566.0 299.44,559.0 299.60,562.3 299.76,553.8 299.92,553.6 300.08,554.6 300.24,562.1 300.40,561.7 300.56,554.8 300.72,564.3 300.88,564.5 301.04,560.5 301.20,566.0 301.36,557.3 301.52,558.3 301.68,562.0 301.84,558.6 302.00,567.0 302.16,550.5 302.32,567.8 302.48,553.3 302.64,557.3 302.80,549.3 302.96,562.0 303.12,566.3 303.28,564.9 303.44,563.2 303.60,547.6 303.76,552.5 303.92,554.5 304.08,551.3 304.24,564.6 304.40,558.4 304.56,556.9 304.72,560.2 304.88,550.7 305.04,550.9 305.20,551.0 305.36,559.8 305.52,558.7 305.68,560.2 305.84,563.3 306.00,547.4 306.16,552.4 306.32,557.0 306.48,547.3 306.64,552.6 306.80,562.4 306.96,562.9 307.12,562.7 307.28,556.3 307.44,554.7 307.60,562.6 307.76,553.8 307.92,558.0 308.08,563.9 308.24,553.8 308.40,552.4 308.56,555.9 308.72,559.4 308.88,558.7 309.04,556.9 309.20,559.1 309.36,547.2 309.52,551.3 309.68,556.9 309.84,551.0 310.00,548.9 310.16,549.7 310.32,551.2 310.48,555.1 310.64,550.8 310.80,557.2 310.96,564.5 311.12,555.3 311.28,562.2 311.44,557.4 311.60,547.4 311.76,554.8 311.92,551.4 312.08,559.6 312.24,550.7 312.40,562.0 312.56,558.7 312.72,547.2 312.88,560.5 313.04,564.4 313.20,553.7 313.36,562.6 313.52,549.4 313.68,559.8 313.84,550.6 314.00,561.6 314.16,550.5 314.32,546.5 314.48,562.3 314.64,572.6 314.80,557.8 314.96,565.7 315.12,562.2 315.28,560.2 315.44,565.7 315.60,571.9 315.76,556.0 315.92,566.6 316.08,565.7 316.24,555.7 316.40,573.9 316.56,576.3 316.72,559.2 316.88,574.8 317.04,564.3 317.20,562.6 317.36,571.8 317.52,563.9 317.68,564.0 317.84,570.3 318.00,568.5 318.16,565.8 318.32,552.4 318.48,551.0 318.64,565.5 318.80,553.8 318.96,559.2 319.12,552.1 319.28,556.5 319.44,550.2 319.60,565.1 319.76,550.7 319.92,554.9 320.08,554.1 320.24,560.8 320.40,546.9 320.56,553.5 320.72,552.2 320.88,555.3 321.04,554.3 321.20,548.8 321.36,552.4 321.52,547.8 321.68,551.4 321.84,547.8 322.00,544.2 322.16,546.7 322.32,548.0 322.48,557.2 322.64,542.1 322.80,545.6 322.96,550.9 323.12,531.5 323.28,532.6 323.44,534.7 323.60,539.7 323.76,552.7 323.92,541.0 324.08,544.7 324.24,536.2 324.40,523.3 324.56,523.4 324.72,540.8 324.88,535.6 325.04,526.6 325.20,539.0 325.36,523.0 325.52,537.2 325.68,538.2 325.84,524.2 326.00,521.0 326.16,531.8 326.32,518.9 326.48,530.0 326.64,516.1 326.80,527.7 326.96,522.2 327.12,517.7 327.28,513.6 327.44,520.1 327.60,504.7 327.76,514.6 327.92,512.7 328.08,519.2 328.24,504.6 328.40,524.7 328.56,509.2 328.72,502.1 328.88,519.6 329.04,520.8 329.20,506.7 329.36,497.8 329.52,508.4 329.68,503.6 329.84,506.4 330.00,519.1 330.16,511.3 330.32,509.8 330.48,511.1 330.64,508.7 330.80,514.3 330.96,517.6 331.12,507.3 331.28,510.1 331.44,522.8 331.60,512.0 331.76,508.9 331.92,520.3 332.08,509.1 332.24,501.3 332.40,509.3 332.56,498.3 332.72,498.7 332.88,502.1 333.04,497.3 333.20,490.9 333.36,490.5 333.52,488.2 333.68,499.9 333.84,483.2 334.00,482.4 334.16,503.1 334.32,480.4 334.48,497.3 334.64,495.3 334.80,482.0 334.96,470.4 335.12,486.1 335.28,487.4 335.44,489.4 335.60,480.9 335.76,490.4 335.92,491.5 336.08,469.0 336.24,491.0 336.40,480.1 336.56,474.0 336.72,476.6 336.88,496.7 337.04,489.2 337.20,465.0 337.36,482.1 337.52,480.5 337.68,480.7 337.84,478.2 338.00,470.3 338.16,491.2 338.32,475.8 338.48,481.3 338.64,479.7 338.80,479.1 338.96,492.3 339.12,489.7 339.28,481.0 339.44,479.1 339.60,483.7 339.76,496.5 339.92,489.7 340.08,491.1 340.24,486.7 340.40,487.8 340.56,491.7 340.72,474.0 340.88,503.4 341.04,482.7 341.20,484.4 341.36,500.8 341.52,491.0 341.68,489.3 341.84,483.7 342.00,475.0 342.16,490.2 342.32,498.9 342.48,480.4 342.64,500.1 342.80,478.0 342.96,481.4 343.12,492.2 343.28,487.6 343.44,493.6 343.60,480.7 343.76,477.9 343.92,470.3 344.08,476.1 344.24,477.1 344.40,473.7 344.56,489.3 344.72,480.4 344.88,468.1 345.04,508.8 345.20,478.3 345.36,474.3 345.52,497.2 345.68,496.4 345.84,474.8 346.00,471.7 346.16,475.9 346.32,495.6 346.48,480.3 346.64,472.7 346.80,484.4 346.96,495.9 347.12,471.3 347.28,480.6 347.44,471.0 347.60,504.6 347.76,501.8 347.92,494.0 348.08,484.0 348.24,492.1 348.40,465.7 348.56,489.3 348.72,473.9 348.88,474.4 349.04,480.9 349.20,482.7 349.36,494.5 349.52,496.2 349.68,492.3 349.84,480.4 350.00,497.4 350.16,489.7 350.32,503.5 350.48,482.3 350.64,465.2 350.80,487.6 350.96,515.6 351.12,498.4 351.28,491.9 351.44,503.7 351.60,500.1 351.76,500.1 351.92,490.1 352.08,496.9 352.24,498.7 352.40,489.9 352.56,485.1 352.72,499.3 352.88,509.2 353.04,506.7 353.20,506.0 353.36,507.2 353.52,531.1 353.68,506.5 353.84,523.0 354.00,527.3 354.16,507.4 354.32,510.7 354.48,520.3 354.64,528.4 354.80,514.3 354.96,515.9 355.12,514.0 355.28,500.7 355.44,527.3 355.60,513.3 355.76,498.2 355.92,516.5 356.08,489.2 356.24,509.2 356.40,521.0 356.56,512.2 356.72,533.3 356.88,508.9 357.04,526.9 357.20,533.7 357.36,539.7 357.52,535.4 357.68,529.9 357.84,529.4 358.00,529.1 358.16,540.1 358.32,525.9 358.48,536.4 358.64,532.4 358.80,535.8 358.96,532.9 359.12,552.8 359.28,534.5 359.44,543.6 359.60,546.2 359.76,551.0 359.92,552.3 360.08,554.5 360.24,560.7 360.40,546.4 360.56,559.0" fill="none" stroke="#000" stroke-width="1" shape-rendering="geometricPrecision"/>
<polyline points="373.00,529.9 373.16,523.5 373.32,535.1 373.48,509.9 373.64,522.3 373.80,496.8 373.96,508.2 374.12,500.4 374.28,499.8 374.44,487.8 374.60,474.8 374.76,477.8 374.92,497.8 375.08,490.2 375.24,482.8 375.40,495.1 375.56,483.8 375.72,484.0 375.88,480.8 376.04,497.3 376.20,502.8 376.36,482.8 376.52,491.5 376.68,496.3 376.84,504.1 377.00,473.6 377.16,490.8 377.32,494.3 377.48,480.1 377.64,492.9 377.80,491.6 377.96,497.7 378.12,486.5 378.28,493.3 378.44,486.6 378.60,494.7 378.76,491.8 378.92,488.4 379.08,481.7 379.24,501.9 379.40,498.4 379.56,497.0 379.72,487.0 379.88,489.0 380.04,501.8 380.20,495.5 380.36,484.8 380.52,490.4 380.68,490.7 380.84,488.2 381.00,483.0 381.16,497.3 381.32,492.6 381.48,487.1 381.64,477.7 381.80,484.0 381.96,487.2 382.12,493.1 382.28,484.5 382.44,494.2 382.60,487.4 382.76,481.2 382.92,468.9 383.08,477.7 383.24,475.2 383.40,484.0 383.56,487.0 383.72,494.0 383.88,484.1 384.04,476.0 384.20,499.8 384.36,485.5 384.52,481.3 384.68,481.0 384.84,473.2 385.00,486.7 385.16,484.6 385.32,492.7 385.48,489.1 385.64,487.2 385.80,489.7 385.96,478.6 386.12,477.0 386.28,479.4 386.44,470.1 386.60,477.9 386.76,476.0 386.92,483.4 387.08,477.6 387.24,461.6 387.40,477.1 387.56,488.5 387.72,460.1 387.88,468.9 388.04,475.4 388.20,462.7 388.36,469.3 388.52,474.5 388.68,460.9 388.84,476.0 389.00,476.8 389.16,460.1 389.32,473.7 389.48,491.1 389.64,473.0 389.80,479.8 389.96,482.6 390.12,474.5 390.28,487.4 390.44,482.1 390.60,469.0 390.76,484.8 390.92,488.9 391.08,489.0 391.24,475.2 391.40,486.9 391.56,496.8 391.72,486.0 391.88,496.3 392.04,498.1 392.20,485.4 392.36,493.1 392.52,484.3 392.68,498.5 392.84,487.6 393.00,483.7 393.16,489.6 393.32,489.9 393.48,495.1 393.64,496.6 393.80,481.0 393.96,482.7 394.12,497.6 394.28,499.5 394.44,495.1 394.60,519.3 394.76,503.8 394.92,491.6 395.08,498.6 395.24,503.7 395.40,493.8 395.56,473.6 395.72,490.0 395.88,489.0 396.04,518.4 396.20,471.0 396.36,500.2 396.52,484.6 396.68,493.3 396.84,482.2 397.00,485.5 397.16,492.8 397.32,483.5 397.48,490.7 397.64,480.9 397.80,477.6 397.96,478.5 398.12,475.7 398.28,478.0 398.44,488.6 398.60,469.5 398.76,466.2 398.92,478.8 399.08,491.9 399.24,487.5 399.40,489.9 399.56,489.7 399.72,475.2 399.88,481.9 400.04,461.7 400.20,477.1 400.36,486.6 400.52,470.7 400.68,467.3 400.84,473.3 401.00,485.0 401.16,497.9 401.32,503.4 401.48,495.2 401.64,473.4 401.80,467.7 401.96,486.6 402.12,493.8 402.28,474.1 402.44,482.6 402.60,483.5 402.76,487.5 402.92,486.3 403.08,491.8 403.24,496.2 403.40,489.2 403.56,494.6 403.72,504.3 403.88,482.0 404.04,482.2 404.20,494.2 404.36,504.6 404.52,492.4 404.68,499.6 404.84,489.0 405.00,497.8 405.16,486.1 405.32,495.4 405.48,493.1 405.64,492.8 405.80,499.7 405.96,497.1 406.12,484.9 406.28,495.2 406.44,476.6 406.60,495.4 406.76,505.7 406.92,491.6 407.08,491.2 407.24,487.8 407.40,492.8 407.56,483.8 407.72,491.2 407.88,484.5 408.04,483.3 408.20,486.7 408.36,485.2 408.52,473.9 408.68,498.7 408.84,485.7 409.00,473.6 409.16,491.2 409.32,483.8 409.48,485.0 409.64,487.9 409.80,477.6 409.96,465.9 410.12,482.0 410.28,483.8 410.44,488.2 410.60,477.2 410.76,479.9 410.92,483.7 411.08,479.1 411.24,479.2 411.40,481.9 411.56,474.3 411.72,489.1 411.88,474.3 412.04,479.5 412.20,477.2 412.36,474.8 412.52,481.5 412.68,483.9 412.84,486.0 413.00,480.9 413.16,475.4 413.32,482.8 413.48,470.3 413.64,478.7 413.80,481.5 413.96,481.9 414.12,472.7 414.28,470.9 414.44,488.5 414.60,476.7 414.76,470.7 414.92,473.1 415.08,480.2 415.24,486.8 415.40,480.5 415.56,487.3 415.72,482.1 415.88,483.6 416.04,486.6 416.20,479.3 416.36,483.2 416.52,479.6 416.68,478.4 416.84,485.7 417.00,477.8 417.16,482.9 417.32,478.3 417.48,482.4 417.64,480.2 417.80,489.3 417.96,483.9 418.12,484.0 418.28,492.8 418.44,469.3 418.60,478.0 418.76,469.6 418.92,484.4 419.08,487.1 419.24,488.4 419.40,486.5 419.56,480.4 419.72,495.0 419.88,487.2 420.04,484.3 420.20,479.8 420.36,488.4 420.52,483.6 420.68,484.0 420.84,487.8 421.00,488.0 421.16,482.5 421.32,494.1 421.48,482.0 421.64,481.6 421.80,489.7 421.96,489.5 422.12,488.9 422.28,486.5 422.44,489.3 422.60,484.4 422.76,480.4 422.92,494.0 423.08,484.4 423.24,489.1 423.40,494.8 423.56,491.1 423.72,505.8 423.88,483.5 424.04,487.5 424.20,492.5 424.36,500.0 424.52,491.1 424.68,484.6 424.84,499.6 425.00,488.1 425.16,492.5 425.32,498.9 425.48,490.3 425.64,491.8 425.80,497.5 425.96,493.8 426.12,496.9 426.28,490.0 426.44,495.0 426.60,489.6 426.76,487.2 426.92,506.8 427.08,499.4 427.24,502.4 427.40,491.6 427.56,497.4 427.72,496.7 427.88,489.8 428.04,501.6 428.20,494.4 428.36,497.7 428.52,490.2 428.68,505.4 428.84,504.3 429.00,502.4 429.16,494.9 429.32,497.3 429.48,508.1 429.64,499.4 429.80,502.7 429.96,502.0 430.12,494.6 430.28,510.5 430.44,489.5 430.60,502.9 430.76,501.1 430.92,492.0 431.08,503.7 431.24,504.9 431.40,502.2 431.56,497.0 431.72,504.7 431.88,508.8 432.04,503.5 432.20,512.6 432.36,507.5 432.52,507.1 432.68,510.9 432.84,498.6 433.00,499.5 433.16,505.8 433.32,505.9 433.48,512.0 433.64,509.9 433.80,504.1 433.96,504.5 434.12,501.6 434.28,501.1 434.44,500.7 434.60,508.9 434.76,500.7 434.92,501.5 435.08,504.7 435.24,500.7 435.40,502.5 435.56,490.9 435.72,506.3 435.88,502.3 436.04,505.4 436.20,506.6 436.36,493.3 436.52,519.0 436.68,505.6 436.84,505.9 437.00,494.2 437.16,508.8 437.32,507.7 437.48,503.2 437.64,506.9 437.80,513.3 437.96,503.6 438.12,500.2 438.28,513.5 438.44,507.1 438.60,504.4 438.76,519.1 438.92,506.2 439.08,504.1 439.24,506.7 439.40,502.6 439.56,506.2 439.72,505.7 439.88,500.7 440.04,503.0 440.20,506.3 440.36,506.7 440.52,507.7 440.68,508.9 440.84,505.5 441.00,507.0 441.16,501.5 441.32,502.2 441.48,509.8 441.64,491.7 441.80,505.6 441.96,518.2 442.12,485.8 442.28,512.0 442.44,492.4 442.60,506.6 442.76,512.4 442.92,511.4 443.08,497.0 443.24,494.5 443.40,493.5 443.56,506.3 443.72,499.6 443.88,501.8 444.04,503.2 444.20,504.0 444.36,504.7 444.52,502.1 444.68,491.6 444.84,509.9 445.00,485.1 445.16,508.3 445.32,497.2 445.48,499.5 445.64,497.5 445.80,498.3 445.96,500.3 446.12,498.6 446.28,493.7 446.44,505.4 446.60,496.9 446.76,508.5 446.92,499.6 447.08,496.3 447.24,503.3 447.40,506.0 447.56,495.2 447.72,499.1 447.88,509.5 448.04,495.0 448.20,495.9 448.36,502.1 448.52,493.9 448.68,486.4 448.84,491.3 449.00,503.6 449.16,505.3 449.32,505.0 449.48,503.9 449.64,494.2 449.80,505.7 449.96,508.6 450.12,497.6 450.28,507.5 450.44,499.7 450.60,503.1 450.76,504.3 450.92,493.2 451.08,511.0 451.24,497.0 451.40,501.2 451.56,498.6 451.72,504.0 451.88,503.6 452.04,500.8 452.20,509.1 452.36,501.8 452.52,497.2 452.68,482.9 452.84,497.3 453.00,497.0 453.16,489.8 453.32,492.7 453.48,501.7 453.64,504.3 453.80,517.0 453.96,504.4 454.12,492.0 454.28,498.0 454.44,487.0 454.60,500.6 454.76,497.8 454.92,491.0 455.08,494.1 455.24,492.8 455.40,489.9 455.56,502.8 455.72,511.0 455.88,498.9 456.04,500.2 456.20,493.8 456.36,489.9 456.52,507.3 456.68,489.2 456.84,494.2 457.00,490.3 457.16,495.0 457.32,490.2 457.48,494.4 457.64,480.8 457.80,488.9 457.96,499.2 458.12,481.5 458.28,483.8 458.44,498.4 458.60,491.0 458.76,495.6 458.92,470.9 459.08,488.2 459.24,477.3 459.40,476.1 459.56,489.6 459.72,495.9 459.88,476.2 460.04,479.6 460.20,484.0 460.36,488.0 460.52,479.3 460.68,507.1 460.84,494.9 461.00,488.1 461.16,487.4 461.32,509.7 461.48,509.5 461.64,489.1 461.80,496.0 461.96,503.5 462.12,485.1 462.28,490.2 462.44,505.7 462.60,490.3 462.76,492.9 462.92,486.2 463.08,491.3 463.24,503.0 463.40,491.7 463.56,488.4 463.72,494.2 463.88,513.6 464.04,501.5 464.20,496.1 464.36,502.3 464.52,505.1 464.68,503.0 464.84,488.1 465.00,505.4 465.16,501.8 465.32,510.7 465.48,493.6 465.64,513.3 465.80,501.3 465.96,491.8 466.12,516.3 466.28,501.8 466.44,509.1 466.60,505.1 466.76,515.3 466.92,515.6 467.08,515.9 467.24,512.9 467.40,494.7 467.56,494.4 467.72,509.5 467.88,500.6 468.04,512.0 468.20,509.9 468.36,497.7 468.52,500.9 468.68,500.4 468.84,502.5 469.00,508.1 469.16,515.2 469.32,520.6 469.48,502.9 469.64,506.2 469.80,522.9 469.96,518.0 470.12,513.1 470.28,493.4 470.44,504.0 470.60,513.2 470.76,507.7 470.92,527.7 471.08,513.4 471.24,515.1 471.40,504.7 471.56,505.4 471.72,508.5 471.88,509.1 472.04,512.1 472.20,516.4 472.36,515.0 472.52,520.4 472.68,502.1 472.84,513.7 473.00,513.5 473.16,523.5 473.32,509.3 473.48,513.1 473.64,504.0 473.80,513.2 473.96,512.6 474.12,504.3 474.28,505.4 474.44,508.2 474.60,512.6 474.76,498.8 474.92,514.3 475.08,504.4 475.24,521.6 475.40,517.8 475.56,502.8 475.72,500.6 475.88,524.6 476.04,509.8 476.20,509.0 476.36,500.8 476.52,502.7 476.68,509.8 476.84,508.0 477.00,496.1 477.16,512.3 477.32,504.4 477.48,494.0 477.64,509.2 477.80,499.5 477.96,506.8 478.12,495.7 478.28,503.0 478.44,487.0 478.60,503.3 478.76,488.0 478.92,501.9 479.08,480.0 479.24,500.3 479.40,506.8 479.56,505.0 479.72,511.0 479.88,492.4 480.04,514.3 480.20,514.8 480.36,491.7 480.52,495.2 480.68,497.1 480.84,501.8 481.00,503.7 481.16,481.6 481.32,507.3 481.48,500.4 481.64,494.1 481.80,510.7 481.96,500.0 482.12,512.6 482.28,507.6 482.44,500.5 482.60,513.3 482.76,510.3 482.92,499.3 483.08,489.9 483.24,499.2 483.40,509.3 483.56,501.6 483.72,521.3 483.88,509.1 484.04,509.4 484.20,512.3 484.36,501.5 484.52,509.4 484.68,501.5 484.84,490.2 485.00,496.3 485.16,525.6 485.32,510.9 485.48,514.9 485.64,502.4 485.80,512.1 485.96,526.9 486.12,520.9 486.28,515.4 486.44,537.7 486.60,522.0 486.76,519.9 486.92,536.8 487.08,506.7 487.24,532.4 487.40,515.1 487.56,519.0 487.72,519.6 487.88,528.1 488.04,527.4 488.20,529.0 488.36,527.4 488.52,540.0 488.68,542.6 488.84,531.3 489.00,531.3 489.16,518.4 489.32,510.0 489.48,527.9 489.64,521.3 489.80,535.3 489.96,500.1 490.12,547.4 490.28,505.1 490.44,518.7 490.60,528.5 490.76,502.4 490.92,510.8 491.08,494.6 491.24,500.4 491.40,494.5 491.56,515.8 491.72,517.3 491.88,510.3 492.04,526.6 492.20,527.4 492.36,512.0 492.52,509.2 492.68,508.1 492.84,505.9 493.00,524.2 493.16,512.6 493.32,506.2 493.48,507.0 493.64,514.9 493.80,504.5 493.96,511.8 494.12,507.7 494.28,530.9 494.44,519.8 494.60,491.9 494.76,505.0 494.92,514.1 495.08,501.3 495.24,514.5 495.40,509.1 495.56,511.5 495.72,504.1 495.88,507.8 496.04,509.8 496.20,487.8 496.36,493.5 496.52,492.1 496.68,521.1 496.84,505.8 497.00,506.2 497.16,503.7 497.32,495.8 497.48,493.0 497.64,510.1 497.80,496.4 497.96,517.5 498.12,502.0 498.28,500.5 498.44,496.8 498.60,498.1 498.76,498.9 498.92,515.0 499.08,523.8 499.24,485.3 499.40,500.6 499.56,505.5 499.72,488.0 499.88,490.9 500.04,492.7 500.20,472.1 500.36,504.2 500.52,496.8 500.68,496.3 500.84,498.0 501.00,499.6 501.16,520.5 501.32,498.8 501.48,505.2 501.64,491.6 501.80,500.2 501.96,493.6 502.12,495.1 502.28,487.8 502.44,488.6 502.60,500.7 502.76,503.3 502.92,500.5 503.08,489.9 503.24,499.0 503.40,472.8 503.56,504.5 503.72,495.5 503.88,498.2 504.04,506.0 504.20,491.9 504.36,503.9 504.52,491.6 504.68,500.1 504.84,491.8 505.00,497.8 505.16,507.3 505.32,489.7 505.48,490.0 505.64,492.3 505.80,497.3 505.96,515.5 506.12,490.1 506.28,478.5 506.44,489.4 506.60,482.2 506.76,490.1 506.92,494.5 507.08,487.0 507.24,488.9 507.40,479.3 507.56,494.3 507.72,486.5 507.88,500.2 508.04,504.5 508.20,483.7 508.36,487.0 508.52,489.8 508.68,495.0 508.84,474.6 509.00,487.1 509.16,502.5 509.32,485.7 509.48,487.8 509.64,485.3 509.80,474.5 509.96,492.3 510.12,485.9 510.28,484.4 510.44,488.8 510.60,488.8 510.76,464.3 510.92,485.0 511.08,475.6 511.24,483.4 511.40,476.6 511.56,476.3 511.72,493.5 511.88,486.0 512.04,484.6 512.20,485.6 512.36,489.9 512.52,490.1 512.68,470.8 512.84,484.8 513.00,491.3 513.16,500.8 513.32,507.0 513.48,488.6 513.64,513.8 513.80,499.3 513.96,503.7 514.12,496.2 514.28,496.7 514.44,514.6 514.60,502.0 514.76,504.0 514.92,515.3 515.08,520.9 515.24,495.8 515.40,507.5 515.56,509.8 515.72,525.2 515.88,531.1 516.04,512.0 516.20,516.1 516.36,520.7 516.52,523.7 516.68,513.1 516.84,523.0 517.00,511.8 517.16,497.6 517.32,508.4 517.48,521.2 517.64,526.3 517.80,504.4 517.96,508.6 518.12,522.6 518.28,503.8 518.44,531.5 518.60,532.8 518.76,506.5 518.92,532.4 519.08,526.3 519.24,538.6 519.40,531.3 519.56,528.5 519.72,531.8 519.88,538.0 520.04,533.5 520.20,533.2 520.36,524.4 520.52,537.3 520.68,535.1 520.84,546.4 521.00,536.2 521.16,536.4 521.32,534.1 521.48,542.0 521.64,537.8 521.80,536.0 521.96,547.9 522.12,549.1 522.28,539.4 522.44,537.6 522.60,547.5 522.76,540.0" fill="none" stroke="#000" stroke-width="1" shape-rendering="geometricPrecision"/>
<polyline points="534.20,568.4 534.36,568.6 534.52,563.0 534.68,551.3 534.84,550.1 535.00,550.1 535.16,543.1 535.32,539.5 535.48,554.4 535.64,540.4 535.80,549.6 535.96,524.4 536.12,528.0 536.28,522.0 536.44,519.7 536.60,518.0 536.76,516.8 536.92,511.4 537.08,528.5 537.24,516.0 537.40,501.9 537.56,503.0 537.72,518.1 537.88,511.6 538.04,500.4 538.20,513.9 538.36,491.3 538.52,499.6 538.68,519.7 538.84,478.0 539.00,500.2 539.16,511.0 539.32,499.4 539.48,492.6 539.64,490.8 539.80,478.4 539.96,485.1 540.12,498.3 540.28,491.2 540.44,496.2 540.60,494.1 540.76,497.9 540.92,477.3 541.08,490.5 541.24,489.5 541.40,489.2 541.56,482.4 541.72,467.9 541.88,497.2 542.04,498.6 542.20,514.7 542.36,496.5 542.52,505.8 542.68,494.2 542.84,483.4 543.00,492.5 543.16,474.7 543.32,489.3 543.48,485.4 543.64,475.4 543.80,498.6 543.96,497.3 544.12,490.3 544.28,493.6 544.44,501.6 544.60,483.6 544.76,471.5 544.92,475.2 545.08,491.0 545.24,486.2 545.40,469.7 545.56,496.0 545.72,485.4 545.88,498.1 546.04,493.3 546.20,478.7 546.36,483.3 546.52,475.6 546.68,474.5 546.84,479.1 547.00,485.9 547.16,493.2 547.32,473.4 547.48,486.8 547.64,481.0 547.80,478.6 547.96,489.5 548.12,477.1 548.28,497.8 548.44,476.8 548.60,471.9 548.76,485.5 548.92,468.4 549.08,471.1 549.24,479.6 549.40,481.7 549.56,480.1 549.72,466.9 549.88,472.6 550.04,488.2 550.20,489.0 550.36,476.9 550.52,487.9 550.68,489.2 550.84,495.2 551.00,481.4 551.16,500.1 551.32,486.1 551.48,501.1 551.64,497.4 551.80,481.9 551.96,488.3 552.12,493.9 552.28,500.6 552.44,481.0 552.60,489.0 552.76,499.0 552.92,498.4 553.08,486.1 553.24,488.0 553.40,499.7 553.56,488.3 553.72,499.2 553.88,505.3 554.04,498.6 554.20,477.9 554.36,508.9 554.52,509.3 554.68,511.8 554.84,508.0 555.00,489.0 555.16,513.3 555.32,505.7 555.48,510.8 555.64,503.1 555.80,503.1 555.96,503.7 556.12,517.7 556.28,508.6 556.44,505.7 556.60,498.7 556.76,511.7 556.92,509.0 557.08,510.8 557.24,517.6 557.40,516.7 557.56,512.4 557.72,514.8 557.88,514.8 558.04,520.5 558.20,521.3 558.36,517.8 558.52,510.7 558.68,525.4 558.84,526.8 559.00,511.3 559.16,524.4 559.32,518.7 559.48,503.8 559.64,523.3 559.80,538.4 559.96,518.9 560.12,519.9 560.28,536.7 560.44,517.7 560.60,520.0 560.76,526.8 560.92,536.8 561.08,537.8 561.24,527.2 561.40,530.1 561.56,534.9 561.72,530.8 561.88,526.7 562.04,525.1 562.20,544.4 562.36,535.6 562.52,565.6 562.68,545.9 562.84,532.2 563.00,540.9 563.16,545.3 563.32,546.7 563.48,548.0 563.64,548.9 563.80,543.3 563.96,552.7 564.12,570.3 564.28,542.4 564.44,544.0 564.60,556.6 564.76,563.2 564.92,559.5 565.08,564.5 565.24,552.0 565.40,551.0 565.56,561.1 565.72,562.2 565.88,573.3 566.04,572.9 566.20,539.4 566.36,566.6 566.52,553.0 566.68,539.6 566.84,565.3 567.00,560.6 567.16,559.8 567.32,551.6 567.48,555.2 567.64,563.8 567.80,552.5 567.96,566.6 568.12,569.5 568.28,567.9 568.44,573.0 568.60,570.5 568.76,561.4 568.92,563.5 569.08,575.0 569.24,583.3 569.40,576.9 569.56,572.0 569.72,578.7 569.88,562.5 570.04,570.5 570.20,576.7 570.36,580.3 570.52,578.3 570.68,578.9 570.84,571.2 571.00,576.5 571.16,583.5 571.32,566.1 571.48,571.5 571.64,578.7 571.80,594.0 571.96,587.4 572.12,594.8 572.28,593.0 572.44,578.3 572.60,581.5 572.76,572.5 572.92,591.8 573.08,588.2 573.24,587.2 573.40,587.8 573.56,586.3 573.72,584.3 573.88,584.9 574.04,592.5 574.20,576.5 574.36,574.6 574.52,583.0 574.68,592.3 574.84,585.1 575.00,581.6 575.16,589.9 575.32,584.3 575.48,568.5 575.64,575.7 575.80,567.3 575.96,582.0 576.12,580.3 576.28,587.3 576.44,600.3 576.60,579.4 576.76,584.2 576.92,581.2 577.08,564.2 577.24,578.5 577.40,578.9 577.56,586.6 577.72,578.2 577.88,574.9 578.04,589.2 578.20,584.3 578.36,578.2 578.52,579.3 578.68,582.8 578.84,591.2 579.00,595.8 579.16,575.5 579.32,594.1 579.48,585.8 579.64,588.2 579.80,592.8 579.96,578.5 580.12,592.2 580.28,576.1 580.44,582.4 580.60,579.6 580.76,598.6 580.92,598.4 581.08,591.9 581.24,590.1 581.40,582.4 581.56,599.5 581.72,597.0 581.88,593.3 582.04,585.9 582.20,584.2 582.36,586.2 582.52,596.9 582.68,580.0 582.84,588.0 583.00,599.4 583.16,593.9 583.32,600.4 583.48,590.6 583.64,590.8 583.80,598.0 583.96,592.6 584.12,592.0 584.28,584.1 584.44,577.0 584.60,599.2 584.76,585.1 584.92,582.7 585.08,594.8 585.24,581.8 585.40,578.5 585.56,584.4 585.72,588.2 585.88,590.8 586.04,592.7 586.20,596.2 586.36,588.2 586.52,591.8 586.68,588.4 586.84,584.5 587.00,592.3 587.16,592.0 587.32,603.2 587.48,593.9 587.64,584.4 587.80,594.0 587.96,587.8 588.12,601.4 588.28,577.1 588.44,584.8 588.60,584.9 588.76,590.7 588.92,588.9 589.08,578.1 589.24,576.1 589.40,591.4 589.56,600.9 589.72,600.9 589.88,587.2 590.04,593.6 590.20,583.8 590.36,579.6 590.52,599.4 590.68,595.4 590.84,587.9 591.00,587.7 591.16,597.3 591.32,592.9 591.48,588.1 591.64,592.7 591.80,590.6 591.96,587.7 592.12,585.5 592.28,597.6 592.44,587.4 592.60,582.2 592.76,604.3 592.92,600.2 593.08,594.9 593.24,590.6 593.40,592.6 593.56,580.4 593.72,591.0 593.88,593.3 594.04,589.8 594.20,594.5 594.36,585.7 594.52,592.7 594.68,579.8 594.84,591.2 595.00,586.9 595.16,581.7 595.32,588.6 595.48,591.7 595.64,587.2 595.80,598.5 595.96,586.5 596.12,598.6 596.28,597.1 596.44,587.3 596.60,602.4 596.76,581.8 596.92,595.8 597.08,592.4 597.24,597.6 597.40,580.5 597.56,583.3 597.72,585.9 597.88,592.2 598.04,592.7 598.20,592.5 598.36,590.3 598.52,583.8 598.68,581.8 598.84,588.5 599.00,595.3 599.16,598.7 599.32,587.3 599.48,598.7 599.64,580.8 599.80,596.1 599.96,582.4 600.12,591.8 600.28,582.9 600.44,582.7 600.60,585.5 600.76,599.6 600.92,584.3 601.08,593.4 601.24,589.8 601.40,590.7 601.56,590.6 601.72,592.7 601.88,579.4 602.04,588.1 602.20,590.1 602.36,583.2 602.52,589.8 602.68,579.8 602.84,592.0 603.00,581.7 603.16,584.5 603.32,591.9 603.48,593.7 603.64,581.9 603.80,581.2 603.96,592.5 604.12,566.5 604.28,594.5 604.44,594.0 604.60,577.3 604.76,592.9 604.92,586.9 605.08,587.4 605.24,567.8 605.40,580.4 605.56,582.3 605.72,580.6 605.88,580.5 606.04,581.1 606.20,564.4 606.36,581.3 606.52,577.7 606.68,581.7 606.84,578.7 607.00,581.9 607.16,583.6 607.32,593.7 607.48,575.7 607.64,592.7 607.80,579.4 607.96,574.9 608.12,571.0 608.28,586.8 608.44,570.5 608.60,587.0 608.76,583.1 608.92,576.8 609.08,576.1 609.24,583.9 609.40,581.6 609.56,585.5 609.72,580.4 609.88,576.9 610.04,584.0 610.20,572.2 610.36,585.9 610.52,580.6 610.68,572.6 610.84,573.3 611.00,577.9 611.16,567.8 611.32,589.3 611.48,586.4 611.64,572.6 611.80,579.1 611.96,591.1 612.12,582.4 612.28,572.9 612.44,565.3 612.60,568.7 612.76,587.4 612.92,581.6 613.08,570.8 613.24,584.1 613.40,576.9 613.56,574.9 613.72,575.8 613.88,576.1 614.04,590.2 614.20,572.9 614.36,576.4 614.52,587.8 614.68,588.9 614.84,572.5 615.00,592.4 615.16,586.1 615.32,569.1 615.48,590.6 615.64,569.0 615.80,583.1 615.96,571.1 616.12,566.9 616.28,584.1 616.44,581.2 616.60,577.9 616.76,579.6 616.92,577.7 617.08,576.6 617.24,571.3 617.40,582.0 617.56,578.3 617.72,576.5 617.88,574.4 618.04,576.2 618.20,568.1 618.36,575.8 618.52,571.4 618.68,585.8 618.84,571.5 619.00,574.6 619.16,577.4 619.32,582.3 619.48,580.1 619.64,577.2 619.80,590.5 619.96,576.8 620.12,578.8 620.28,593.0 620.44,571.1 620.60,582.5 620.76,579.2 620.92,568.2 621.08,572.4 621.24,581.3 621.40,567.2 621.56,574.8 621.72,581.6 621.88,574.3 622.04,577.3 622.20,571.6 622.36,571.7 622.52,571.7 622.68,573.2 622.84,579.0 623.00,575.6 623.16,586.8 623.32,578.2 623.48,576.5 623.64,588.1 623.80,573.7 623.96,569.8 624.12,575.4 624.28,568.0 624.44,577.3 624.60,582.2 624.76,577.8 624.92,571.7 625.08,573.1 625.24,576.7 625.40,580.6 625.56,570.0 625.72,571.2 625.88,579.7 626.04,574.7 626.20,575.3 626.36,576.0 626.52,568.8 626.68,572.2 626.84,578.9 627.00,572.0 627.16,571.7 627.32,574.4 627.48,574.8 627.64,586.6 627.80,568.0 627.96,573.1 628.12,583.3 628.28,572.3 628.44,574.1 628.60,563.9 628.76,576.8 628.92,576.0 629.08,575.4 629.24,569.6 629.40,572.3 629.56,569.6 629.72,574.3 629.88,569.3 630.04,573.4 630.20,561.5 630.36,566.6 630.52,553.8 630.68,567.0 630.84,571.7 631.00,565.8 631.16,579.7 631.32,561.2 631.48,564.4 631.64,560.9 631.80,562.9 631.96,562.8 632.12,557.0 632.28,559.4 632.44,575.5 632.60,562.7 632.76,568.8 632.92,556.5 633.08,562.5 633.24,565.8 633.40,561.6 633.56,559.4 633.72,560.9 633.88,561.8 634.04,565.9 634.20,567.6 634.36,553.5 634.52,549.1 634.68,559.0 634.84,559.2 635.00,562.3 635.16,563.5 635.32,552.3 635.48,567.9 635.64,555.9 635.80,542.0 635.96,558.6 636.12,553.2 636.28,552.3 636.44,538.4 636.60,546.3 636.76,548.6 636.92,545.4 637.08,550.7 637.24,554.1 637.40,555.4 637.56,552.5 637.72,540.4 637.88,554.7 638.04,541.8 638.20,545.9 638.36,535.6 638.52,524.6 638.68,515.7 638.84,537.0 639.00,530.4 639.16,537.5 639.32,546.9 639.48,526.0 639.64,524.9 639.80,544.6 639.96,546.7 640.12,541.9 640.28,540.7 640.44,531.9 640.60,547.1 640.76,542.0 640.92,554.3 641.08,560.3 641.24,547.2 641.40,557.6 641.56,556.5 641.72,562.6 641.88,571.9 642.04,564.6 642.20,566.2 642.36,568.2 642.52,557.4 642.68,562.7 642.84,567.3 643.00,577.3 643.16,578.0 643.32,587.8 643.48,554.5 643.64,565.0 643.80,548.4 643.96,560.3 644.12,549.4 644.28,577.5 644.44,573.5 644.60,555.4 644.76,569.5 644.92,573.6 645.08,583.7 645.24,574.7 645.40,567.8 645.56,565.8 645.72,573.0 645.88,569.9 646.04,562.2 646.20,555.0 646.36,577.7 646.52,560.1 646.68,564.7 646.84,575.5 647.00,567.1 647.16,585.8 647.32,556.7 647.48,575.5 647.64,554.8 647.80,553.2 647.96,557.9 648.12,569.5 648.28,561.7 648.44,554.8 648.60,580.6 648.76,559.2 648.92,567.7 649.08,571.5 649.24,564.3 649.40,572.6 649.56,575.1 649.72,568.0 649.88,579.2 650.04,563.3 650.20,558.7 650.36,571.0 650.52,559.7 650.68,572.6 650.84,568.1 651.00,564.6 651.16,574.5 651.32,574.1 651.48,544.4 651.64,566.0 651.80,570.3 651.96,573.6 652.12,564.0 652.28,558.4 652.44,570.2 652.60,575.2 652.76,550.3 652.92,555.4 653.08,563.7 653.24,545.8 653.40,563.7 653.56,576.3 653.72,559.6 653.88,570.2 654.04,561.2 654.20,572.7 654.36,578.1 654.52,580.3 654.68,569.6 654.84,578.0 655.00,572.4 655.16,565.0 655.32,581.5 655.48,563.6 655.64,569.6 655.80,588.6 655.96,579.1 656.12,559.3 656.28,568.5 656.44,560.5 656.60,563.5 656.76,550.8 656.92,565.6 657.08,549.1 657.24,565.9 657.40,565.4 657.56,569.2 657.72,581.4 657.88,545.0 658.04,548.6 658.20,549.9 658.36,553.3 658.52,566.4 658.68,554.3 658.84,551.4 659.00,545.5 659.16,549.8 659.32,551.0 659.48,553.7 659.64,540.1 659.80,552.8 659.96,558.7 660.12,556.0 660.28,539.4 660.44,559.6 660.60,559.0 660.76,553.3 660.92,537.1 661.08,534.0 661.24,549.0 661.40,537.3 661.56,533.5 661.72,556.2 661.88,555.8 662.04,552.2 662.20,558.7 662.36,553.7 662.52,530.5 662.68,555.0 662.84,543.0 663.00,545.9 663.16,568.5 663.32,544.4 663.48,556.7 663.64,538.6 663.80,532.7 663.96,528.1 664.12,534.1 664.28,514.8 664.44,533.4 664.60,532.0 664.76,526.1 664.92,488.0 665.08,504.5 665.24,539.2 665.40,517.6 665.56,546.3 665.72,519.1 665.88,534.8 666.04,508.0 666.20,517.6 666.36,522.3 666.52,532.1 666.68,546.1 666.84,535.9 667.00,502.6 667.16,521.5 667.32,518.4 667.48,511.2 667.64,527.4 667.80,540.5 667.96,511.6 668.12,533.2 668.28,536.7 668.44,502.9 668.60,541.1 668.76,539.5 668.92,520.7 669.08,539.0 669.24,519.6 669.40,531.0 669.56,524.3 669.72,504.9 669.88,518.9 670.04,513.3 670.20,509.1 670.36,500.9 670.52,505.4 670.68,499.9 670.84,527.9 671.00,491.2 671.16,514.9 671.32,506.8 671.48,499.4 671.64,521.6 671.80,504.4 671.96,526.4 672.12,511.1 672.28,516.7 672.44,511.6 672.60,520.3 672.76,523.5 672.92,508.2 673.08,513.1 673.24,532.6 673.40,506.9 673.56,533.2 673.72,508.9 673.88,507.2 674.04,494.8 674.20,504.0 674.36,494.2 674.52,507.1 674.68,521.0 674.84,512.8 675.00,506.8 675.16,502.2 675.32,506.0 675.48,497.5 675.64,499.6 675.80,535.0 675.96,516.3 676.12,503.6 676.28,521.1 676.44,530.2 676.60,506.7 676.76,512.6 676.92,500.0 677.08,496.3 677.24,529.0 677.40,542.5 677.56,505.7 677.72,496.0 677.88,529.5 678.04,525.6 678.20,519.2 678.36,530.2 678.52,510.9 678.68,517.8 678.84,523.4 679.00,512.4 679.16,520.7 679.32,514.0 679.48,521.1 679.64,518.5 679.80,498.9 679.96,518.6 680.12,505.3 680.28,511.0 680.44,504.5 680.60,526.0 680.76,516.8 680.92,516.8 681.08,530.1 681.24,526.1 681.40,519.4 681.56,508.1 681.72,530.9 681.88,526.6 682.04,528.5 682.20,538.8 682.36,529.0 682.52,538.1 682.68,547.3 682.84,547.6 683.00,542.1 683.16,558.5 683.32,558.9 683.48,566.1 683.64,556.0 683.80,560.3 683.96,568.0 684.12,566.7 684.28,567.4 684.44,568.4" fill="none" stroke="#000" stroke-width="1" shape-rendering="geometricPrecision"/>
<path d="M233.3 454V480 M316.7 556V578 M360.2 540V578 M373.2 520V556 M389.3 448V480 M395.6 447V480 M488.0 515V562 M511.0 457V485 M522.6 535V566 M534.2 545V578 M549.0 458V480 M598.4 590V614 M638.8 512V540 M670.3 505V597 M684.7 555V584" stroke="#000" stroke-width="1.1" fill="none"/>
<text x="216.5" y="652.8" font-size="16" font-weight="normal" fill="#000" textLength="44.5" lengthAdjust="spacingAndGlyphs">00:00</text>
<text x="432.8" y="652.8" font-size="16" font-weight="normal" fill="#000" textLength="44.5" lengthAdjust="spacingAndGlyphs">12:00</text>
<text x="648.6" y="652.8" font-size="16" font-weight="normal" fill="#000" textLength="44.5" lengthAdjust="spacingAndGlyphs">00:00</text>
<text x="216.8" y="672.8" font-size="16" font-weight="normal" fill="#000" textLength="44.2" lengthAdjust="spacingAndGlyphs">4.225</text>
<text x="433.1" y="672.8" font-size="16" font-weight="normal" fill="#000" textLength="44.2" lengthAdjust="spacingAndGlyphs">5.756</text>
<text x="648.9" y="672.8" font-size="16" font-weight="normal" fill="#000" textLength="44.2" lengthAdjust="spacingAndGlyphs">3.179</text>
<text x="200.9" y="692.9" font-size="16" font-weight="normal" fill="#000" textLength="60.1" lengthAdjust="spacingAndGlyphs">-10.580</text>
<text x="427.3" y="692.9" font-size="16" font-weight="normal" fill="#000" textLength="50.0" lengthAdjust="spacingAndGlyphs">-1.544</text>
<text x="633.0" y="692.9" font-size="16" font-weight="normal" fill="#000" textLength="60.1" lengthAdjust="spacingAndGlyphs">-16.190</text>
<text x="216.8" y="712.9" font-size="16" font-weight="normal" fill="#000" textLength="44.2" lengthAdjust="spacingAndGlyphs">2.247</text>
<text x="433.1" y="712.9" font-size="16" font-weight="normal" fill="#000" textLength="44.2" lengthAdjust="spacingAndGlyphs">5.398</text>
<text x="648.9" y="712.9" font-size="16" font-weight="normal" fill="#000" textLength="44.2" lengthAdjust="spacingAndGlyphs">8.125</text>
<text x="216.8" y="733.0" font-size="16" font-weight="normal" fill="#000" textLength="44.2" lengthAdjust="spacingAndGlyphs">4.373</text>
<text x="433.1" y="733.0" font-size="16" font-weight="normal" fill="#000" textLength="44.2" lengthAdjust="spacingAndGlyphs">5.760</text>
<text x="648.9" y="733.0" font-size="16" font-weight="normal" fill="#000" textLength="44.2" lengthAdjust="spacingAndGlyphs">3.447</text>
<text x="157.3" y="672.8" font-size="16" font-weight="normal" fill="#000" textLength="10.5" lengthAdjust="spacingAndGlyphs">R</text>
<text x="168.0" y="678.2" font-size="9.5" font-weight="bold" fill="#000" textLength="6.2" lengthAdjust="spacingAndGlyphs">E</text>
<text x="138.3" y="692.9" font-size="16" font-weight="normal" fill="#000" textLength="36.0" lengthAdjust="spacingAndGlyphs">MLat</text>
<text x="144.0" y="713.0" font-size="16" font-weight="normal" fill="#000" textLength="31.0" lengthAdjust="spacingAndGlyphs">MLT</text>
<text x="166.3" y="733.0" font-size="16" font-weight="normal" fill="#000" textLength="8.2" lengthAdjust="spacingAndGlyphs">L</text>
<text x="252.4" y="756.6" font-size="16" font-weight="normal" fill="#000" textLength="403.0" lengthAdjust="spacingAndGlyphs">2012-12-01 (336) 23:00 to 2012-12-03 (338) 01:00</text>
<g shape-rendering="geometricPrecision">
<path d="M346.5 447.5V363a4 4 0 0 1 4-4H587a4 4 0 0 1 4 4v84.5z" fill="#b4b4b4"/>
<path d="M347.5 446.5V363.5a3 3 0 0 1 3-3H587a3 3 0 0 1 3 3v83z" fill="url(#dlgT)"/>
</g>
<rect x="349" y="384" width="240" height="62" fill="#fbfbfb"/>
<path d="M360 369h8.5l-4.25 5.3z" fill="#8a8a8a" shape-rendering="geometricPrecision"/>
<text x="411.3" y="377.6" font-size="13" font-weight="bold" fill="#6e6e6e" textLength="114.5" lengthAdjust="spacingAndGlyphs">Progress Monitor</text>
<path d="M569 369L577 376.5M577 369L569 376.5" stroke="#a4a4a4" stroke-width="2.2" shape-rendering="geometricPrecision"/>
<text x="414.2" y="396.7" font-size="15" font-weight="normal" fill="#1a1a2a" textLength="109.5" lengthAdjust="spacingAndGlyphs" stroke="#1a1a2a" stroke-width="0.45">running batch</text>
<text x="363.0" y="408.9" font-size="9" font-weight="normal" fill="#1a1a1a" textLength="213.0" lengthAdjust="spacingAndGlyphs" stroke="#1a1a1a" stroke-width="0.3">write /hom...walk3/product_20121213_00.png</text>
<rect x="349" y="411" width="220" height="20" fill="#6f89b0"/><rect x="350" y="412" width="218" height="18" fill="#ececec"/><rect x="350" y="412" width="87" height="18" fill="#a3b6cc"/>
<rect x="569" y="411" width="20" height="20" fill="#8b9cb0"/><rect x="570" y="412" width="18" height="18" fill="url(#btnG)"/>
<rect x="572.5" y="414" width="13.5" height="13.5" rx="2.5" fill="#d83a44" stroke="#a82030" stroke-width="0.8" shape-rendering="geometricPrecision"/>
<path d="M576 417.5l6.5 6.5M582.5 417.5L576 424" stroke="#fff" stroke-width="2.4" shape-rendering="geometricPrecision"/>
<text x="376.6" y="442.6" font-size="13" font-weight="bold" fill="#222" textLength="185.0" lengthAdjust="spacingAndGlyphs">25/62 (46.9/min, eta 48.6 s)</text>
</svg></body></html>
